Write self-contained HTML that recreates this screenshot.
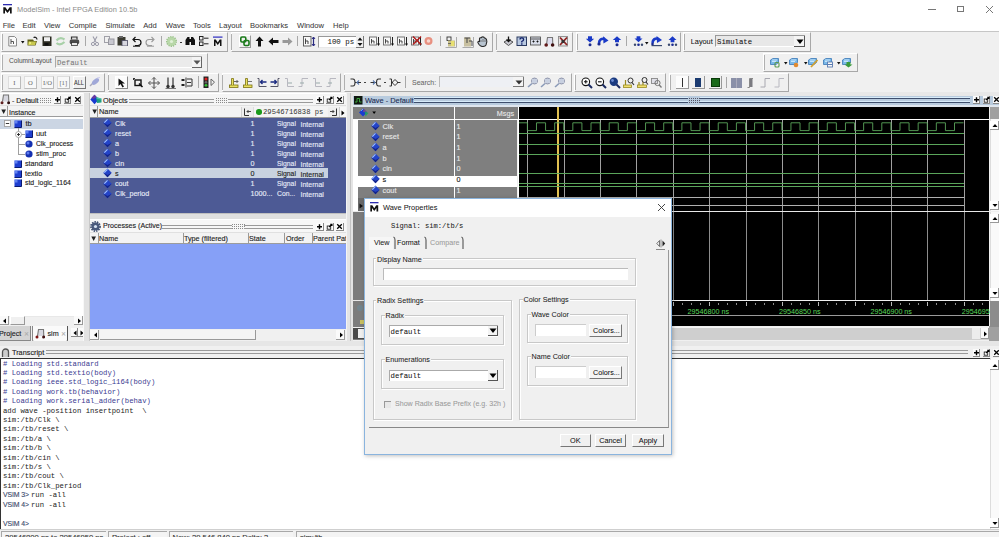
<!DOCTYPE html><html><head><meta charset="utf-8"><style>
*{box-sizing:border-box;}
html,body{margin:0;padding:0;}
body{width:999px;height:537px;overflow:hidden;position:relative;background:#f0f0f0;font-family:"Liberation Sans",sans-serif;font-size:7px;color:#000;}
div,span,svg{position:absolute;}
.t{white-space:nowrap;line-height:1;transform:translateY(-50%);-webkit-text-stroke:0.12px currentColor;}
.m{font-family:"Liberation Mono",monospace;}
span[style*="Mono"]{-webkit-text-stroke:0;}
</style></head><body>
<div style="left:0px;top:0px;width:999px;height:18px;background:#fff"></div>
<svg style="left:3px;top:4px;" width="10" height="10" viewBox="0 0 10 10"><rect x="0" y="0" width="9" height="1.3" fill="#2b2bb0"/><path d="M0.3 9.5V3.3H2.4L4.5 6.3L6.6 3.3H8.7V9.5H7V6L4.5 9L2 6V9.5Z" fill="#111"/></svg>
<span class="t" style="left:17px;top:9.50px;font-size:7.4px;color:#8a8a8a;-webkit-text-stroke:0;">ModelSim - Intel FPGA Edition 10.5b</span>
<div style="left:928px;top:9px;width:8px;height:1px;background:#777"></div>
<div style="left:957px;top:5.5px;width:7px;height:6.5px;border:1px solid #777"></div>
<svg style="left:985px;top:5px;" width="9" height="9" viewBox="0 0 9 9"><path d="M1 1L8 8M8 1L1 8" stroke="#777" stroke-width="1"/></svg>
<div style="left:0px;top:18px;width:999px;height:13.5px;background:#fff"></div>
<span class="t" style="left:2.7px;top:25.70px;font-size:7.6px;color:#3a3a3a;-webkit-text-stroke:0.05px currentColor;">File</span>
<span class="t" style="left:22.5px;top:25.70px;font-size:7.6px;color:#3a3a3a;-webkit-text-stroke:0.05px currentColor;">Edit</span>
<span class="t" style="left:44px;top:25.70px;font-size:7.6px;color:#3a3a3a;-webkit-text-stroke:0.05px currentColor;">View</span>
<span class="t" style="left:68.8px;top:25.70px;font-size:7.6px;color:#3a3a3a;-webkit-text-stroke:0.05px currentColor;">Compile</span>
<span class="t" style="left:105.4px;top:25.70px;font-size:7.6px;color:#3a3a3a;-webkit-text-stroke:0.05px currentColor;">Simulate</span>
<span class="t" style="left:143.2px;top:25.70px;font-size:7.6px;color:#3a3a3a;-webkit-text-stroke:0.05px currentColor;">Add</span>
<span class="t" style="left:165.8px;top:25.70px;font-size:7.6px;color:#3a3a3a;-webkit-text-stroke:0.05px currentColor;">Wave</span>
<span class="t" style="left:193px;top:25.70px;font-size:7.6px;color:#3a3a3a;-webkit-text-stroke:0.05px currentColor;">Tools</span>
<span class="t" style="left:219px;top:25.70px;font-size:7.6px;color:#3a3a3a;-webkit-text-stroke:0.05px currentColor;">Layout</span>
<span class="t" style="left:250px;top:25.70px;font-size:7.6px;color:#3a3a3a;-webkit-text-stroke:0.05px currentColor;">Bookmarks</span>
<span class="t" style="left:297px;top:25.70px;font-size:7.6px;color:#3a3a3a;-webkit-text-stroke:0.05px currentColor;">Window</span>
<span class="t" style="left:333px;top:25.70px;font-size:7.6px;color:#3a3a3a;-webkit-text-stroke:0.05px currentColor;">Help</span>
<div style="left:0px;top:31px;width:999px;height:1.2px;background:#c6c6c6"></div>
<div style="left:1px;top:32px;width:227px;height:19.5px;border-left:1px solid #fff;border-top:1px solid #fff;border-right:1px solid #a8a8a8;border-bottom:1px solid #a8a8a8;"></div>
<div style="left:1.5px;top:34px;width:1px;height:15.5px;background:#b0b0b0"></div>
<div style="left:230.5px;top:32px;width:262.5px;height:19.5px;border-left:1px solid #fff;border-top:1px solid #fff;border-right:1px solid #a8a8a8;border-bottom:1px solid #a8a8a8;"></div>
<div style="left:231.0px;top:34px;width:1px;height:15.5px;background:#b0b0b0"></div>
<div style="left:495.5px;top:32px;width:77.5px;height:19.5px;border-left:1px solid #fff;border-top:1px solid #fff;border-right:1px solid #a8a8a8;border-bottom:1px solid #a8a8a8;"></div>
<div style="left:496.0px;top:34px;width:1px;height:15.5px;background:#b0b0b0"></div>
<div style="left:576px;top:32px;width:104.5px;height:19.5px;border-left:1px solid #fff;border-top:1px solid #fff;border-right:1px solid #a8a8a8;border-bottom:1px solid #a8a8a8;"></div>
<div style="left:576.5px;top:34px;width:1px;height:15.5px;background:#b0b0b0"></div>
<div style="left:683px;top:32px;width:128px;height:19.5px;border-left:1px solid #fff;border-top:1px solid #fff;border-right:1px solid #a8a8a8;border-bottom:1px solid #a8a8a8;"></div>
<div style="left:683.5px;top:34px;width:1px;height:15.5px;background:#b0b0b0"></div>
<div style="left:1px;top:52.5px;width:207px;height:19.5px;border-left:1px solid #fff;border-top:1px solid #fff;border-right:1px solid #a8a8a8;border-bottom:1px solid #a8a8a8;"></div>
<div style="left:1.5px;top:54.5px;width:1px;height:15.5px;background:#b0b0b0"></div>
<div style="left:763px;top:52.5px;width:95px;height:19.5px;border-left:1px solid #fff;border-top:1px solid #fff;border-right:1px solid #a8a8a8;border-bottom:1px solid #a8a8a8;"></div>
<div style="left:763.5px;top:54.5px;width:1px;height:15.5px;background:#b0b0b0"></div>
<div style="left:1px;top:72.5px;width:104px;height:19.5px;border-left:1px solid #fff;border-top:1px solid #fff;border-right:1px solid #a8a8a8;border-bottom:1px solid #a8a8a8;"></div>
<div style="left:1.5px;top:74.5px;width:1px;height:15.5px;background:#b0b0b0"></div>
<div style="left:107.5px;top:72.5px;width:111.5px;height:19.5px;border-left:1px solid #fff;border-top:1px solid #fff;border-right:1px solid #a8a8a8;border-bottom:1px solid #a8a8a8;"></div>
<div style="left:108.0px;top:74.5px;width:1px;height:15.5px;background:#b0b0b0"></div>
<div style="left:221.5px;top:72.5px;width:119.0px;height:19.5px;border-left:1px solid #fff;border-top:1px solid #fff;border-right:1px solid #a8a8a8;border-bottom:1px solid #a8a8a8;"></div>
<div style="left:222.0px;top:74.5px;width:1px;height:15.5px;background:#b0b0b0"></div>
<div style="left:343.5px;top:72.5px;width:228.0px;height:19.5px;border-left:1px solid #fff;border-top:1px solid #fff;border-right:1px solid #a8a8a8;border-bottom:1px solid #a8a8a8;"></div>
<div style="left:344.0px;top:74.5px;width:1px;height:15.5px;background:#b0b0b0"></div>
<div style="left:574px;top:72.5px;width:91.5px;height:19.5px;border-left:1px solid #fff;border-top:1px solid #fff;border-right:1px solid #a8a8a8;border-bottom:1px solid #a8a8a8;"></div>
<div style="left:574.5px;top:74.5px;width:1px;height:15.5px;background:#b0b0b0"></div>
<div style="left:669px;top:72.5px;width:119.5px;height:19.5px;border-left:1px solid #fff;border-top:1px solid #fff;border-right:1px solid #a8a8a8;border-bottom:1px solid #a8a8a8;"></div>
<div style="left:669.5px;top:74.5px;width:1px;height:15.5px;background:#b0b0b0"></div>
<div style="left:0px;top:93px;width:83px;height:12px;background:#f5f5f5"></div>
<div style="left:89.5px;top:93px;width:256px;height:12px;background:#f5f5f5"></div>
<div style="left:89.5px;top:220px;width:256px;height:12px;background:#f7f7f7"></div>
<div style="left:0px;top:92.5px;width:83px;height:1px;background:#fff"></div>
<svg style="left:0px;top:93px;" width="10" height="12" viewBox="0 0 10 12"><path d="M2.5 8.5L3.5 2H8.5L8.8 8.5" stroke="#777" stroke-width="1.1" fill="#d8d8e0"/><circle cx="2" cy="9.8" r="1.5" fill="#602020"/><circle cx="8.6" cy="9.8" r="1.5" fill="#301010"/></svg>
<span class="t" style="left:12px;top:100.00px;font-size:7px;color:#222;">- Default</span>
<svg style="left:40px;top:98px;" width="12" height="6" viewBox="0 0 12 6"><rect x="0" y="0" width="1" height="1" fill="#8a8a8a"/><rect x="0" y="2" width="1" height="1" fill="#8a8a8a"/><rect x="0" y="4" width="1" height="1" fill="#8a8a8a"/><rect x="2" y="0" width="1" height="1" fill="#8a8a8a"/><rect x="2" y="2" width="1" height="1" fill="#8a8a8a"/><rect x="2" y="4" width="1" height="1" fill="#8a8a8a"/><rect x="4" y="0" width="1" height="1" fill="#8a8a8a"/><rect x="4" y="2" width="1" height="1" fill="#8a8a8a"/><rect x="4" y="4" width="1" height="1" fill="#8a8a8a"/><rect x="6" y="0" width="1" height="1" fill="#8a8a8a"/><rect x="6" y="2" width="1" height="1" fill="#8a8a8a"/><rect x="6" y="4" width="1" height="1" fill="#8a8a8a"/><rect x="8" y="0" width="1" height="1" fill="#8a8a8a"/><rect x="8" y="2" width="1" height="1" fill="#8a8a8a"/><rect x="8" y="4" width="1" height="1" fill="#8a8a8a"/><rect x="10" y="0" width="1" height="1" fill="#8a8a8a"/><rect x="10" y="2" width="1" height="1" fill="#8a8a8a"/><rect x="10" y="4" width="1" height="1" fill="#8a8a8a"/></svg>
<div style="left:53.5px;top:96px;width:7.5px;height:8px;background:#fbfbfb;border-right:1px solid #888;border-bottom:1px solid #888;"></div>
<svg style="left:53.5px;top:96px;" width="7" height="7" viewBox="0 0 7 7"><path d="M3.5 1.2V6.2M1 3.7H6" stroke="#000" stroke-width="1.4"/></svg>
<div style="left:63.7px;top:96px;width:7.5px;height:8px;background:#fbfbfb;border-right:1px solid #888;border-bottom:1px solid #888;"></div>
<svg style="left:63.7px;top:96px;" width="7" height="7" viewBox="0 0 7 7"><rect x="1.2" y="3" width="3.5" height="3.2" fill="none" stroke="#222" stroke-width="0.9"/><path d="M3.2 4L6 1.2M4.2 1.2H6V3" stroke="#000" stroke-width="1.1" fill="none"/></svg>
<div style="left:73.9px;top:96px;width:7.5px;height:8px;background:#fbfbfb;border-right:1px solid #888;border-bottom:1px solid #888;"></div>
<svg style="left:73.9px;top:96px;" width="7" height="7" viewBox="0 0 7 7"><path d="M1.2 1.2L5.8 5.8M5.8 1.2L1.2 5.8" stroke="#000" stroke-width="1.3"/></svg>
<div style="left:0px;top:105px;width:83px;height:12px;background:#f3f3f3;border-top:1px solid #e0e0e0;border-bottom:1px solid #9c9c9c;"></div>
<svg style="left:1px;top:108.5px;" width="6" height="6" viewBox="0 0 6 6"><path d="M0.3 0.5H5L2.65 5Z" fill="#222"/></svg>
<div style="left:7.3px;top:106px;width:0.8px;height:10px;background:#9a9a9a"></div>
<span class="t" style="left:9px;top:111.80px;font-size:7px;color:#222;">Instance</span>
<div style="left:0px;top:117px;width:83px;height:198.5px;background:#fff"></div>
<div style="left:0px;top:118.5px;width:83px;height:10px;background:#cbd5e3"></div>
<svg style="left:3.5px;top:120px;" width="7" height="7" viewBox="0 0 7 7"><rect x="0.5" y="0.5" width="6" height="6" fill="#fff" stroke="#a0a0a0" stroke-width="0.9"/><path d="M1.8 3.5H5.2" stroke="#222" stroke-width="0.9"/></svg>
<svg style="left:14px;top:119.5px;" width="8" height="8" viewBox="0 0 8 8"><rect x="0.5" y="0.5" width="7" height="7" fill="#1f3fd0"/><rect x="0.5" y="0.5" width="3" height="3" fill="#7fa0ff" opacity="0.7"/><path d="M7.5 0.5V7.5H0.5" stroke="#0a1a70" stroke-width="1" fill="none"/></svg>
<span class="t" style="left:25.5px;top:123.50px;font-size:7.4px;color:#222;">tb</span>
<div style="left:17.8px;top:128px;width:0.8px;height:26px;background:#a0a0a0"></div>
<div style="left:18px;top:133.6px;width:7px;height:0.8px;background:#a0a0a0"></div>
<div style="left:18px;top:143.6px;width:7px;height:0.8px;background:#a0a0a0"></div>
<div style="left:18px;top:153.6px;width:7px;height:0.8px;background:#a0a0a0"></div>
<svg style="left:14.5px;top:130.5px;" width="7" height="7" viewBox="0 0 7 7"><circle cx="3.5" cy="3.5" r="3" fill="#fff" stroke="#a0a0a0" stroke-width="0.9"/><path d="M2 3.5H5M3.5 2V5" stroke="#222" stroke-width="0.9"/></svg>
<svg style="left:25px;top:129.8px;" width="8" height="8" viewBox="0 0 8 8"><rect x="0.5" y="0.5" width="7" height="7" fill="#1f3fd0"/><rect x="0.5" y="0.5" width="3" height="3" fill="#7fa0ff" opacity="0.7"/><path d="M7.5 0.5V7.5H0.5" stroke="#0a1a70" stroke-width="1" fill="none"/></svg>
<span class="t" style="left:36px;top:134.30px;font-size:7.4px;color:#222;">uut</span>
<svg style="left:25px;top:139.6px;" width="8" height="8" viewBox="0 0 8 8"><circle cx="4" cy="4" r="3.6" fill="#1530b0"/><circle cx="3" cy="3" r="1.5" fill="#6f8fff" opacity="0.8"/></svg>
<span class="t" style="left:36px;top:144.10px;font-size:6.75px;color:#222;">Clk_process</span>
<svg style="left:25px;top:149.7px;" width="8" height="8" viewBox="0 0 8 8"><circle cx="4" cy="4" r="3.6" fill="#1530b0"/><circle cx="3" cy="3" r="1.5" fill="#6f8fff" opacity="0.8"/></svg>
<span class="t" style="left:36px;top:154.10px;font-size:6.9px;color:#222;">stim_proc</span>
<svg style="left:14px;top:159.7px;" width="8" height="8" viewBox="0 0 8 8"><rect x="0.5" y="0.5" width="7" height="7" fill="#1f3fd0"/><rect x="0.5" y="0.5" width="3" height="3" fill="#7fa0ff" opacity="0.7"/><path d="M7.5 0.5V7.5H0.5" stroke="#0a1a70" stroke-width="1" fill="none"/></svg>
<span class="t" style="left:25px;top:164.30px;font-size:7.2px;color:#222;">standard</span>
<svg style="left:14px;top:169.8px;" width="8" height="8" viewBox="0 0 8 8"><rect x="0.5" y="0.5" width="7" height="7" fill="#1f3fd0"/><rect x="0.5" y="0.5" width="3" height="3" fill="#7fa0ff" opacity="0.7"/><path d="M7.5 0.5V7.5H0.5" stroke="#0a1a70" stroke-width="1" fill="none"/></svg>
<span class="t" style="left:25px;top:174.40px;font-size:7.2px;color:#222;">textio</span>
<svg style="left:14px;top:179px;" width="8" height="8" viewBox="0 0 8 8"><rect x="0.5" y="0.5" width="7" height="7" fill="#1f3fd0"/><rect x="0.5" y="0.5" width="3" height="3" fill="#7fa0ff" opacity="0.7"/><path d="M7.5 0.5V7.5H0.5" stroke="#0a1a70" stroke-width="1" fill="none"/></svg>
<span class="t" style="left:25px;top:183.20px;font-size:6.9px;color:#222;">std_logic_1164</span>
<div style="left:0px;top:315.5px;width:83px;height:10px;background:#f0f0f0;border-top:1px solid #e8e8e8"></div>
<div style="left:0px;top:316px;width:8.5px;height:9px;background:#fafafa;border-right:1px solid #999;border-bottom:1px solid #999;"></div>
<svg style="left:2px;top:317.5px;" width="5" height="6" viewBox="0 0 5 6"><path d="M4 0.5V5.5L1 3Z" fill="#000"/></svg>
<div style="left:9.5px;top:316px;width:15px;height:9px;background:#f0f0f0;border-right:1px solid #999;border-bottom:1px solid #999;border-left:1px solid #fff;border-top:1px solid #fff"></div>
<div style="left:74px;top:316px;width:8.5px;height:9px;background:#fafafa;border-right:1px solid #999;border-bottom:1px solid #999;"></div>
<svg style="left:77px;top:317.5px;" width="5" height="6" viewBox="0 0 5 6"><path d="M1 0.5V5.5L4 3Z" fill="#000"/></svg>
<div style="left:0px;top:326px;width:31px;height:14.5px;background:#d4d4d4;border-right:1px solid #888;border-bottom:1px solid #888"></div>
<span class="t" style="left:-1px;top:334.00px;font-size:7.2px;color:#222;">Project</span>
<span class="t" style="left:24px;top:334.00px;font-size:6px;color:#aaa;">✕</span>
<div style="left:32px;top:325.5px;width:36px;height:16px;background:#fafafa;border-left:1px solid #888;border-right:1px solid #555;border-bottom:1.5px solid #444;border-radius:0 0 2px 2px"></div>
<svg style="left:35px;top:328px;" width="10" height="11" viewBox="0 0 10 11"><path d="M2.5 8L3.5 1.5H8.5L8.8 8" stroke="#777" stroke-width="1.1" fill="#d8d8e0"/><circle cx="2" cy="9" r="1.5" fill="#801818"/><circle cx="8.6" cy="9" r="1.5" fill="#401010"/></svg>
<span class="t" style="left:47.5px;top:334.00px;font-size:7.2px;color:#222;">sim</span>
<span class="t" style="left:61px;top:334.00px;font-size:6px;color:#aaa;">✕</span>
<div style="left:71px;top:327.5px;width:6.5px;height:9px;background:#fafafa;border-right:1px solid #888;border-bottom:1px solid #888"></div>
<svg style="left:72.5px;top:329.5px;" width="4" height="6" viewBox="0 0 4 6"><path d="M3.5 0.5V5.5L0.5 3Z" fill="#000"/></svg>
<div style="left:78px;top:327.5px;width:6.5px;height:9px;background:#fafafa;border-right:1px solid #888;border-bottom:1px solid #888"></div>
<svg style="left:79.5px;top:329.5px;" width="4" height="6" viewBox="0 0 4 6"><path d="M0.5 0.5V5.5L3.5 3Z" fill="#000"/></svg>
<div style="left:83px;top:92.5px;width:6.5px;height:249px;background:#e2e2e2;border-left:1px solid #f8f8f8;border-right:1px solid #c8c8c8"></div>
<div style="left:89.5px;top:92.5px;width:256px;height:1px;background:#fff"></div>
<svg style="left:90px;top:93.5px;" width="12" height="11" viewBox="0 0 12 11"><path d="M4.5 0.8L9 5.5L4.5 10.3L0.3 5.5Z" fill="#1a3ad0"/><path d="M4.5 0.8L7 3.3L3 5L1.5 3.8Z" fill="#6a3aa0"/><path d="M6 3L11.5 4.5V8.5L7 9Z" fill="#20a080"/><path d="M6.5 4L11 5" stroke="#60d0c0" stroke-width="0.8"/></svg>
<span class="t" style="left:103px;top:100.50px;font-size:7.3px;color:#222;">Objects</span>
<div style="left:129px;top:98.5px;width:85px;height:1px;background:#9a9a9a"></div>
<div style="left:129px;top:101.5px;width:85px;height:1px;background:#9a9a9a"></div>
<svg style="left:216px;top:98px;" width="12" height="6" viewBox="0 0 12 6"><rect x="0" y="0" width="1" height="1" fill="#8a8a8a"/><rect x="0" y="2" width="1" height="1" fill="#8a8a8a"/><rect x="0" y="4" width="1" height="1" fill="#8a8a8a"/><rect x="2" y="0" width="1" height="1" fill="#8a8a8a"/><rect x="2" y="2" width="1" height="1" fill="#8a8a8a"/><rect x="2" y="4" width="1" height="1" fill="#8a8a8a"/><rect x="4" y="0" width="1" height="1" fill="#8a8a8a"/><rect x="4" y="2" width="1" height="1" fill="#8a8a8a"/><rect x="4" y="4" width="1" height="1" fill="#8a8a8a"/><rect x="6" y="0" width="1" height="1" fill="#8a8a8a"/><rect x="6" y="2" width="1" height="1" fill="#8a8a8a"/><rect x="6" y="4" width="1" height="1" fill="#8a8a8a"/><rect x="8" y="0" width="1" height="1" fill="#8a8a8a"/><rect x="8" y="2" width="1" height="1" fill="#8a8a8a"/><rect x="8" y="4" width="1" height="1" fill="#8a8a8a"/><rect x="10" y="0" width="1" height="1" fill="#8a8a8a"/><rect x="10" y="2" width="1" height="1" fill="#8a8a8a"/><rect x="10" y="4" width="1" height="1" fill="#8a8a8a"/></svg>
<div style="left:228px;top:98.5px;width:84.5px;height:1px;background:#9a9a9a"></div>
<div style="left:228px;top:101.5px;width:84.5px;height:1px;background:#9a9a9a"></div>
<div style="left:316.0px;top:96px;width:7.5px;height:8px;background:#fbfbfb;border-right:1px solid #888;border-bottom:1px solid #888;"></div>
<svg style="left:316.0px;top:96px;" width="7" height="7" viewBox="0 0 7 7"><path d="M3.5 1.2V6.2M1 3.7H6" stroke="#000" stroke-width="1.4"/></svg>
<div style="left:326.2px;top:96px;width:7.5px;height:8px;background:#fbfbfb;border-right:1px solid #888;border-bottom:1px solid #888;"></div>
<svg style="left:326.2px;top:96px;" width="7" height="7" viewBox="0 0 7 7"><rect x="1.2" y="3" width="3.5" height="3.2" fill="none" stroke="#222" stroke-width="0.9"/><path d="M3.2 4L6 1.2M4.2 1.2H6V3" stroke="#000" stroke-width="1.1" fill="none"/></svg>
<div style="left:336.4px;top:96px;width:7.5px;height:8px;background:#fbfbfb;border-right:1px solid #888;border-bottom:1px solid #888;"></div>
<svg style="left:336.4px;top:96px;" width="7" height="7" viewBox="0 0 7 7"><path d="M1.2 1.2L5.8 5.8M5.8 1.2L1.2 5.8" stroke="#000" stroke-width="1.3"/></svg>
<div style="left:89.5px;top:105px;width:256.0px;height:12.5px;background:#f3f3f3;border-top:1px solid #e0e0e0;border-bottom:1px solid #9c9c9c;"></div>
<svg style="left:91.8px;top:108.5px;" width="6" height="6" viewBox="0 0 6 6"><path d="M0.3 0.5H5L2.65 5Z" fill="#222"/></svg>
<div style="left:97.3px;top:106px;width:0.8px;height:10.5px;background:#9a9a9a"></div>
<span class="t" style="left:99px;top:112.00px;font-size:7.4px;color:#222;">Name</span>
<div style="left:241px;top:106.5px;width:104px;height:10.5px;background:#eeeeee;border-left:1px solid #d0d0d0"></div>
<svg style="left:243px;top:107.5px;" width="9" height="9" viewBox="0 0 9 9"><path d="M1.5 0.5V7.5H6" stroke="#333" stroke-width="1" fill="none"/><path d="M8 3.5H4M5.5 2L4 3.5L5.5 5" stroke="#333" stroke-width="0.9" fill="none"/></svg>
<div style="left:252.5px;top:107px;width:75px;height:10px;background:#f4f4f4;border-left:1px solid #ddd"></div>
<div style="left:256px;top:109.2px;width:5.5px;height:5.5px;background:#1a9a1a;border-radius:50%"></div>
<span class="t" style="left:263px;top:113.40px;font-family:Liberation Mono,monospace;font-size:7.2px;color:#333;">29546716838 ps</span>
<svg style="left:329px;top:107.5px;" width="9" height="9" viewBox="0 0 9 9"><path d="M7.5 0.5V7.5H3" stroke="#333" stroke-width="1" fill="none"/><path d="M1 3.5H5M3.5 2L5 3.5L3.5 5" stroke="#333" stroke-width="0.9" fill="none"/></svg>
<div style="left:339px;top:107px;width:6.5px;height:10px;background:#f8f8f8;border-left:1px solid #ccc"></div>
<svg style="left:340.5px;top:109.5px;" width="4" height="6" viewBox="0 0 4 6"><path d="M0.5 0.5V5.5L3.5 3Z" fill="#000"/></svg>
<div style="left:89.5px;top:117.5px;width:256px;height:95.5px;background:#4d5a95"></div>
<svg style="left:103px;top:118.2px;" width="9" height="10" viewBox="0 0 9 10"><path d="M4.5 0.5L8.7 4.8L4.5 9.3L0.3 4.8Z" fill="#2444c8"/><path d="M8.7 4.8L4.5 9.3L0.3 4.8L4.5 7Z" fill="#14248a"/><path d="M1.3 4.6L4.5 1.4" stroke="#a0c0ff" stroke-width="1.1"/></svg>
<span class="t" style="left:115px;top:123.70px;font-size:7.2px;color:#e8ecf8;">Clk</span>
<span class="t" style="left:250.5px;top:123.70px;font-size:7.2px;color:#e8ecf8;">1</span>
<span class="t" style="left:277px;top:123.70px;font-size:6.8px;color:#e8ecf8;">Signal</span>
<span class="t" style="left:300.5px;top:123.70px;font-size:7px;color:#e8ecf8;">Internal</span>
<svg style="left:103px;top:128.25px;" width="9" height="10" viewBox="0 0 9 10"><path d="M4.5 0.5L8.7 4.8L4.5 9.3L0.3 4.8Z" fill="#2444c8"/><path d="M8.7 4.8L4.5 9.3L0.3 4.8L4.5 7Z" fill="#14248a"/><path d="M1.3 4.6L4.5 1.4" stroke="#a0c0ff" stroke-width="1.1"/></svg>
<span class="t" style="left:115px;top:133.75px;font-size:7.2px;color:#e8ecf8;">reset</span>
<span class="t" style="left:250.5px;top:133.75px;font-size:7.2px;color:#e8ecf8;">1</span>
<span class="t" style="left:277px;top:133.75px;font-size:6.8px;color:#e8ecf8;">Signal</span>
<span class="t" style="left:300.5px;top:133.75px;font-size:7px;color:#e8ecf8;">Internal</span>
<svg style="left:103px;top:138.3px;" width="9" height="10" viewBox="0 0 9 10"><path d="M4.5 0.5L8.7 4.8L4.5 9.3L0.3 4.8Z" fill="#2444c8"/><path d="M8.7 4.8L4.5 9.3L0.3 4.8L4.5 7Z" fill="#14248a"/><path d="M1.3 4.6L4.5 1.4" stroke="#a0c0ff" stroke-width="1.1"/></svg>
<span class="t" style="left:115px;top:143.80px;font-size:7.2px;color:#e8ecf8;">a</span>
<span class="t" style="left:250.5px;top:143.80px;font-size:7.2px;color:#e8ecf8;">1</span>
<span class="t" style="left:277px;top:143.80px;font-size:6.8px;color:#e8ecf8;">Signal</span>
<span class="t" style="left:300.5px;top:143.80px;font-size:7px;color:#e8ecf8;">Internal</span>
<svg style="left:103px;top:148.35px;" width="9" height="10" viewBox="0 0 9 10"><path d="M4.5 0.5L8.7 4.8L4.5 9.3L0.3 4.8Z" fill="#2444c8"/><path d="M8.7 4.8L4.5 9.3L0.3 4.8L4.5 7Z" fill="#14248a"/><path d="M1.3 4.6L4.5 1.4" stroke="#a0c0ff" stroke-width="1.1"/></svg>
<span class="t" style="left:115px;top:153.85px;font-size:7.2px;color:#e8ecf8;">b</span>
<span class="t" style="left:250.5px;top:153.85px;font-size:7.2px;color:#e8ecf8;">1</span>
<span class="t" style="left:277px;top:153.85px;font-size:6.8px;color:#e8ecf8;">Signal</span>
<span class="t" style="left:300.5px;top:153.85px;font-size:7px;color:#e8ecf8;">Internal</span>
<svg style="left:103px;top:158.4px;" width="9" height="10" viewBox="0 0 9 10"><path d="M4.5 0.5L8.7 4.8L4.5 9.3L0.3 4.8Z" fill="#2444c8"/><path d="M8.7 4.8L4.5 9.3L0.3 4.8L4.5 7Z" fill="#14248a"/><path d="M1.3 4.6L4.5 1.4" stroke="#a0c0ff" stroke-width="1.1"/></svg>
<span class="t" style="left:115px;top:163.90px;font-size:7.2px;color:#e8ecf8;">cin</span>
<span class="t" style="left:250.5px;top:163.90px;font-size:7.2px;color:#e8ecf8;">0</span>
<span class="t" style="left:277px;top:163.90px;font-size:6.8px;color:#e8ecf8;">Signal</span>
<span class="t" style="left:300.5px;top:163.90px;font-size:7px;color:#e8ecf8;">Internal</span>
<div style="left:89.5px;top:168.45px;width:238.5px;height:10px;background:#c8d2e0"></div>
<svg style="left:103px;top:168.45px;" width="9" height="10" viewBox="0 0 9 10"><path d="M4.5 0.5L8.7 4.8L4.5 9.3L0.3 4.8Z" fill="#2444c8"/><path d="M8.7 4.8L4.5 9.3L0.3 4.8L4.5 7Z" fill="#14248a"/><path d="M1.3 4.6L4.5 1.4" stroke="#a0c0ff" stroke-width="1.1"/></svg>
<span class="t" style="left:115px;top:173.95px;font-size:7.2px;color:#222;">s</span>
<span class="t" style="left:250.5px;top:173.95px;font-size:7.2px;color:#222;">0</span>
<span class="t" style="left:277px;top:173.95px;font-size:6.8px;color:#222;">Signal</span>
<span class="t" style="left:300.5px;top:173.95px;font-size:7px;color:#222;">Internal</span>
<svg style="left:103px;top:178.5px;" width="9" height="10" viewBox="0 0 9 10"><path d="M4.5 0.5L8.7 4.8L4.5 9.3L0.3 4.8Z" fill="#2444c8"/><path d="M8.7 4.8L4.5 9.3L0.3 4.8L4.5 7Z" fill="#14248a"/><path d="M1.3 4.6L4.5 1.4" stroke="#a0c0ff" stroke-width="1.1"/></svg>
<span class="t" style="left:115px;top:184.00px;font-size:7.2px;color:#e8ecf8;">cout</span>
<span class="t" style="left:250.5px;top:184.00px;font-size:7.2px;color:#e8ecf8;">1</span>
<span class="t" style="left:277px;top:184.00px;font-size:6.8px;color:#e8ecf8;">Signal</span>
<span class="t" style="left:300.5px;top:184.00px;font-size:7px;color:#e8ecf8;">Internal</span>
<svg style="left:103px;top:188.55px;" width="9" height="10" viewBox="0 0 9 10"><path d="M4.5 0.5L8.7 4.8L4.5 9.3L0.3 4.8Z" fill="#2444c8"/><path d="M8.7 4.8L4.5 9.3L0.3 4.8L4.5 7Z" fill="#14248a"/><path d="M1.3 4.6L4.5 1.4" stroke="#a0c0ff" stroke-width="1.1"/></svg>
<span class="t" style="left:115px;top:194.05px;font-size:7.2px;color:#e8ecf8;">Clk_period</span>
<span class="t" style="left:250.5px;top:194.05px;font-size:7.2px;color:#e8ecf8;">1000...</span>
<span class="t" style="left:277px;top:194.05px;font-size:6.8px;color:#e8ecf8;">Con...</span>
<span class="t" style="left:300.5px;top:194.05px;font-size:7px;color:#e8ecf8;">Internal</span>
<div style="left:89.5px;top:213px;width:256px;height:7px;background:#e0e0e0;border-top:1px solid #c0c0c0;border-bottom:1px solid #fff"></div>
<svg style="left:90px;top:221px;" width="11" height="11" viewBox="0 0 11 11"><circle cx="5.5" cy="5.5" r="4" fill="#4a5a7c"/><circle cx="5.5" cy="5.5" r="4.6" fill="none" stroke="#3e4e70" stroke-width="1.6" stroke-dasharray="1.5 1"/><circle cx="5.5" cy="5.5" r="1.6" fill="#d8e4f4"/></svg>
<span class="t" style="left:103px;top:226.70px;font-size:7.1px;color:#222;">Processes (Active)</span>
<div style="left:162px;top:224.5px;width:70px;height:1px;background:#9a9a9a"></div>
<div style="left:162px;top:227.5px;width:70px;height:1px;background:#9a9a9a"></div>
<svg style="left:232px;top:224px;" width="13" height="6" viewBox="0 0 13 6"><rect x="0" y="0" width="1" height="1" fill="#8a8a8a"/><rect x="0" y="2" width="1" height="1" fill="#8a8a8a"/><rect x="0" y="4" width="1" height="1" fill="#8a8a8a"/><rect x="2" y="0" width="1" height="1" fill="#8a8a8a"/><rect x="2" y="2" width="1" height="1" fill="#8a8a8a"/><rect x="2" y="4" width="1" height="1" fill="#8a8a8a"/><rect x="4" y="0" width="1" height="1" fill="#8a8a8a"/><rect x="4" y="2" width="1" height="1" fill="#8a8a8a"/><rect x="4" y="4" width="1" height="1" fill="#8a8a8a"/><rect x="6" y="0" width="1" height="1" fill="#8a8a8a"/><rect x="6" y="2" width="1" height="1" fill="#8a8a8a"/><rect x="6" y="4" width="1" height="1" fill="#8a8a8a"/><rect x="8" y="0" width="1" height="1" fill="#8a8a8a"/><rect x="8" y="2" width="1" height="1" fill="#8a8a8a"/><rect x="8" y="4" width="1" height="1" fill="#8a8a8a"/><rect x="10" y="0" width="1" height="1" fill="#8a8a8a"/><rect x="10" y="2" width="1" height="1" fill="#8a8a8a"/><rect x="10" y="4" width="1" height="1" fill="#8a8a8a"/><rect x="12" y="0" width="1" height="1" fill="#8a8a8a"/><rect x="12" y="2" width="1" height="1" fill="#8a8a8a"/><rect x="12" y="4" width="1" height="1" fill="#8a8a8a"/></svg>
<div style="left:244px;top:224.5px;width:68.5px;height:1px;background:#9a9a9a"></div>
<div style="left:244px;top:227.5px;width:68.5px;height:1px;background:#9a9a9a"></div>
<div style="left:316.0px;top:222.5px;width:7.5px;height:8px;background:#fbfbfb;border-right:1px solid #888;border-bottom:1px solid #888;"></div>
<svg style="left:316.0px;top:222.5px;" width="7" height="7" viewBox="0 0 7 7"><path d="M3.5 1.2V6.2M1 3.7H6" stroke="#000" stroke-width="1.4"/></svg>
<div style="left:326.2px;top:222.5px;width:7.5px;height:8px;background:#fbfbfb;border-right:1px solid #888;border-bottom:1px solid #888;"></div>
<svg style="left:326.2px;top:222.5px;" width="7" height="7" viewBox="0 0 7 7"><rect x="1.2" y="3" width="3.5" height="3.2" fill="none" stroke="#222" stroke-width="0.9"/><path d="M3.2 4L6 1.2M4.2 1.2H6V3" stroke="#000" stroke-width="1.1" fill="none"/></svg>
<div style="left:336.4px;top:222.5px;width:7.5px;height:8px;background:#fbfbfb;border-right:1px solid #888;border-bottom:1px solid #888;"></div>
<svg style="left:336.4px;top:222.5px;" width="7" height="7" viewBox="0 0 7 7"><path d="M1.2 1.2L5.8 5.8M5.8 1.2L1.2 5.8" stroke="#000" stroke-width="1.3"/></svg>
<div style="left:89.5px;top:232px;width:256.0px;height:11.5px;background:#f3f3f3;border-top:1px solid #e0e0e0;border-bottom:1px solid #9c9c9c;"></div>
<svg style="left:91px;top:235.5px;" width="6" height="6" viewBox="0 0 6 6"><path d="M0.3 0.5H5L2.65 5Z" fill="#222"/></svg>
<div style="left:97.8px;top:233px;width:0.8px;height:10px;background:#9a9a9a"></div>
<div style="left:182.5px;top:233px;width:0.8px;height:10px;background:#9a9a9a"></div>
<div style="left:248px;top:233px;width:0.8px;height:10px;background:#9a9a9a"></div>
<div style="left:284.4px;top:233px;width:0.8px;height:10px;background:#9a9a9a"></div>
<div style="left:312.4px;top:233px;width:0.8px;height:10px;background:#9a9a9a"></div>
<span class="t" style="left:99px;top:238.80px;font-size:7.2px;color:#222;">Name</span>
<span class="t" style="left:184px;top:238.80px;font-size:7.2px;color:#222;">Type (filtered)</span>
<span class="t" style="left:249px;top:238.80px;font-size:7.2px;color:#222;">State</span>
<span class="t" style="left:286px;top:238.80px;font-size:7.2px;color:#222;">Order</span>
<span class="t" style="left:313px;top:238.80px;font-size:7.2px;color:#222;">Parent Pat</span>
<div style="left:89.5px;top:243.5px;width:256px;height:85px;background:#86a0f7"></div>
<div style="left:89.5px;top:328.5px;width:256px;height:12px;background:#f0f0f0"></div>
<div style="left:90px;top:329.5px;width:9px;height:10px;background:#fafafa;border-right:1px solid #999;border-bottom:1px solid #999;"></div>
<svg style="left:92.5px;top:331.5px;" width="5" height="6" viewBox="0 0 5 6"><path d="M4 0.5V5.5L1 3Z" fill="#000"/></svg>
<div style="left:100px;top:329.5px;width:156px;height:10px;background:#f4f4f4;border-right:1px solid #999;border-bottom:1px solid #999;"></div>
<div style="left:336px;top:329.5px;width:9px;height:10px;background:#fafafa;border-right:1px solid #999;border-bottom:1px solid #999;"></div>
<svg style="left:339px;top:331.5px;" width="5" height="6" viewBox="0 0 5 6"><path d="M1 0.5V5.5L4 3Z" fill="#000"/></svg>
<div style="left:345.5px;top:92.5px;width:7.5px;height:249px;background:#e4e4e4;border-left:1px solid #f4f4f4"></div>
<div style="left:349.5px;top:92.5px;width:1px;height:249px;background:#c4c4c4"></div>
<div style="left:353px;top:92px;width:646px;height:3.5px;background:#e8e8e8"></div>
<div style="left:353px;top:95.5px;width:646px;height:9.5px;background:#b8cbde"></div>
<svg style="left:354px;top:96px;" width="9" height="9" viewBox="0 0 9 9"><rect x="0" y="0" width="8.5" height="8.5" fill="#101810"/><path d="M1 6H3V2.5H5.5V6H7.5" stroke="#3aa03a" stroke-width="1" fill="none"/></svg>
<span class="t" style="left:365px;top:100.70px;font-size:7.4px;color:#1f2f55;">Wave - Default</span>
<div style="left:414px;top:96.5px;width:556px;height:1px;background:#d8ecfa"></div>
<div style="left:414px;top:97.5px;width:556px;height:1.7px;background:#3e4e6c"></div>
<div style="left:414px;top:100.5px;width:556px;height:1px;background:#d8ecfa"></div>
<div style="left:414px;top:101.5px;width:556px;height:1.7px;background:#3e4e6c"></div>
<div style="left:688px;top:96.5px;width:12px;height:7px;background:#b8cbde"></div>
<svg style="left:689px;top:97.5px;" width="11" height="6" viewBox="0 0 11 6"><rect x="0" y="0" width="1" height="1" fill="#556"/><rect x="0" y="2" width="1" height="1" fill="#556"/><rect x="0" y="4" width="1" height="1" fill="#556"/><rect x="2" y="0" width="1" height="1" fill="#556"/><rect x="2" y="2" width="1" height="1" fill="#556"/><rect x="2" y="4" width="1" height="1" fill="#556"/><rect x="4" y="0" width="1" height="1" fill="#556"/><rect x="4" y="2" width="1" height="1" fill="#556"/><rect x="4" y="4" width="1" height="1" fill="#556"/><rect x="6" y="0" width="1" height="1" fill="#556"/><rect x="6" y="2" width="1" height="1" fill="#556"/><rect x="6" y="4" width="1" height="1" fill="#556"/><rect x="8" y="0" width="1" height="1" fill="#556"/><rect x="8" y="2" width="1" height="1" fill="#556"/><rect x="8" y="4" width="1" height="1" fill="#556"/><rect x="10" y="0" width="1" height="1" fill="#556"/><rect x="10" y="2" width="1" height="1" fill="#556"/><rect x="10" y="4" width="1" height="1" fill="#556"/></svg>
<div style="left:972.5px;top:96px;width:7.5px;height:8px;background:#fbfbfb;border-right:1px solid #888;border-bottom:1px solid #888;"></div>
<svg style="left:972.5px;top:96px;" width="7" height="7" viewBox="0 0 7 7"><path d="M3.5 1.2V6.2M1 3.7H6" stroke="#000" stroke-width="1.4"/></svg>
<div style="left:982.7px;top:96px;width:7.5px;height:8px;background:#fbfbfb;border-right:1px solid #888;border-bottom:1px solid #888;"></div>
<svg style="left:982.7px;top:96px;" width="7" height="7" viewBox="0 0 7 7"><rect x="1.2" y="3" width="3.5" height="3.2" fill="none" stroke="#222" stroke-width="0.9"/><path d="M3.2 4L6 1.2M4.2 1.2H6V3" stroke="#000" stroke-width="1.1" fill="none"/></svg>
<div style="left:992.9px;top:96px;width:7.5px;height:8px;background:#fbfbfb;border-right:1px solid #888;border-bottom:1px solid #888;"></div>
<svg style="left:992.9px;top:96px;" width="7" height="7" viewBox="0 0 7 7"><path d="M1.2 1.2L5.8 5.8M5.8 1.2L1.2 5.8" stroke="#000" stroke-width="1.3"/></svg>
<div style="left:353px;top:105px;width:646px;height:2px;background:#dfe6ee"></div>
<div style="left:353px;top:107px;width:165px;height:12px;background:#7f7f7f"></div>
<svg style="left:358px;top:108px;" width="12" height="10" viewBox="0 0 12 10"><path d="M5 0.5L9 4.5L5 8.5L1 4.5Z" fill="#1a3ad0"/><path d="M5.5 0.5L9 4H5Z" fill="#7040a0"/><path d="M6.5 3L10.5 5L7.5 8.5Z" fill="#20a060" opacity="0.9"/><path d="M3 3L5 1" stroke="#6af" stroke-width="1"/></svg>
<svg style="left:372px;top:111px;" width="5" height="4" viewBox="0 0 5 4"><path d="M0.3 0.5H4L2.15 3Z" fill="#000"/></svg>
<div style="left:454px;top:107px;width:1.2px;height:90px;background:#fff"></div>
<span class="t" style="left:514px;top:113.50px;font-size:7.2px;color:#e8e8e8;transform:translate(-100%,-50%);">Msgs</span>
<div style="left:517.5px;top:107px;width:1.2px;height:90px;background:#fff"></div>
<div style="left:519px;top:107px;width:470px;height:12px;background:#000"></div>
<div style="left:353px;top:118.7px;width:636px;height:1.3px;background:#fff"></div>
<div style="left:353px;top:120px;width:5.3px;height:91px;background:#fff"></div>
<div style="left:358.3px;top:120px;width:95.7px;height:77.5px;background:#7f7f7f"></div>
<div style="left:455.2px;top:120px;width:62.3px;height:77.5px;background:#7f7f7f"></div>
<svg style="left:371px;top:121.1px;" width="9" height="10" viewBox="0 0 9 10"><path d="M4.5 0.5L8.7 4.8L4.5 9.3L0.3 4.8Z" fill="#2444c8"/><path d="M8.7 4.8L4.5 9.3L0.3 4.8L4.5 7Z" fill="#14248a"/><path d="M1.3 4.6L4.5 1.4" stroke="#a0c0ff" stroke-width="1.1"/></svg>
<span class="t" style="left:382.5px;top:126.60px;font-size:7.4px;color:#e8e8e8;">Clk</span>
<span class="t" style="left:456.5px;top:126.60px;font-size:7.2px;color:#e8e8e8;">1</span>
<svg style="left:371px;top:131.76999999999998px;" width="9" height="10" viewBox="0 0 9 10"><path d="M4.5 0.5L8.7 4.8L4.5 9.3L0.3 4.8Z" fill="#2444c8"/><path d="M8.7 4.8L4.5 9.3L0.3 4.8L4.5 7Z" fill="#14248a"/><path d="M1.3 4.6L4.5 1.4" stroke="#a0c0ff" stroke-width="1.1"/></svg>
<span class="t" style="left:382.5px;top:137.27px;font-size:7.4px;color:#e8e8e8;">reset</span>
<span class="t" style="left:456.5px;top:137.27px;font-size:7.2px;color:#e8e8e8;">1</span>
<svg style="left:371px;top:142.44px;" width="9" height="10" viewBox="0 0 9 10"><path d="M4.5 0.5L8.7 4.8L4.5 9.3L0.3 4.8Z" fill="#2444c8"/><path d="M8.7 4.8L4.5 9.3L0.3 4.8L4.5 7Z" fill="#14248a"/><path d="M1.3 4.6L4.5 1.4" stroke="#a0c0ff" stroke-width="1.1"/></svg>
<span class="t" style="left:382.5px;top:147.94px;font-size:7.4px;color:#e8e8e8;">a</span>
<span class="t" style="left:456.5px;top:147.94px;font-size:7.2px;color:#e8e8e8;">1</span>
<svg style="left:371px;top:153.10999999999999px;" width="9" height="10" viewBox="0 0 9 10"><path d="M4.5 0.5L8.7 4.8L4.5 9.3L0.3 4.8Z" fill="#2444c8"/><path d="M8.7 4.8L4.5 9.3L0.3 4.8L4.5 7Z" fill="#14248a"/><path d="M1.3 4.6L4.5 1.4" stroke="#a0c0ff" stroke-width="1.1"/></svg>
<span class="t" style="left:382.5px;top:158.61px;font-size:7.4px;color:#e8e8e8;">b</span>
<span class="t" style="left:456.5px;top:158.61px;font-size:7.2px;color:#e8e8e8;">1</span>
<svg style="left:371px;top:163.78px;" width="9" height="10" viewBox="0 0 9 10"><path d="M4.5 0.5L8.7 4.8L4.5 9.3L0.3 4.8Z" fill="#2444c8"/><path d="M8.7 4.8L4.5 9.3L0.3 4.8L4.5 7Z" fill="#14248a"/><path d="M1.3 4.6L4.5 1.4" stroke="#a0c0ff" stroke-width="1.1"/></svg>
<span class="t" style="left:382.5px;top:169.28px;font-size:7.4px;color:#e8e8e8;">cin</span>
<span class="t" style="left:456.5px;top:169.28px;font-size:7.2px;color:#e8e8e8;">0</span>
<div style="left:358.3px;top:176.15px;width:95.7px;height:10.5px;background:#fff"></div>
<div style="left:455.2px;top:176.15px;width:62.3px;height:10.5px;background:#fff"></div>
<svg style="left:371px;top:174.45px;" width="9" height="10" viewBox="0 0 9 10"><path d="M4.5 0.5L8.7 4.8L4.5 9.3L0.3 4.8Z" fill="#2444c8"/><path d="M8.7 4.8L4.5 9.3L0.3 4.8L4.5 7Z" fill="#14248a"/><path d="M1.3 4.6L4.5 1.4" stroke="#a0c0ff" stroke-width="1.1"/></svg>
<span class="t" style="left:382.5px;top:179.95px;font-size:7.4px;color:#111;">s</span>
<span class="t" style="left:456.5px;top:179.95px;font-size:7.2px;color:#111;">0</span>
<svg style="left:371px;top:185.11999999999998px;" width="9" height="10" viewBox="0 0 9 10"><path d="M4.5 0.5L8.7 4.8L4.5 9.3L0.3 4.8Z" fill="#2444c8"/><path d="M8.7 4.8L4.5 9.3L0.3 4.8L4.5 7Z" fill="#14248a"/><path d="M1.3 4.6L4.5 1.4" stroke="#a0c0ff" stroke-width="1.1"/></svg>
<span class="t" style="left:382.5px;top:190.62px;font-size:7.4px;color:#e8e8e8;">cout</span>
<span class="t" style="left:456.5px;top:190.62px;font-size:7.2px;color:#e8e8e8;">1</span>
<div style="left:358.3px;top:197.5px;width:95.7px;height:13.5px;background:#6a6a6a"></div>
<svg style="left:359px;top:203px;" width="5" height="6" viewBox="0 0 5 6"><path d="M0.5 0.5V5.5L4 3Z" fill="#111"/></svg>
<div style="left:519px;top:120px;width:470px;height:206px;background:#000"></div>
<div style="left:527.4px;top:120px;width:0.9px;height:91px;background:#a0a0a0"></div>
<div style="left:527.4px;top:212px;width:0.8px;height:88px;background:#8c8c8c"></div>
<div style="left:563.75px;top:120px;width:0.9px;height:91px;background:#a0a0a0"></div>
<div style="left:563.75px;top:212px;width:0.8px;height:88px;background:#8c8c8c"></div>
<div style="left:600.1px;top:120px;width:0.9px;height:91px;background:#a0a0a0"></div>
<div style="left:600.1px;top:212px;width:0.8px;height:88px;background:#8c8c8c"></div>
<div style="left:636.45px;top:120px;width:0.9px;height:91px;background:#a0a0a0"></div>
<div style="left:636.45px;top:212px;width:0.8px;height:88px;background:#8c8c8c"></div>
<div style="left:672.8px;top:120px;width:0.9px;height:91px;background:#a0a0a0"></div>
<div style="left:672.8px;top:212px;width:0.8px;height:88px;background:#8c8c8c"></div>
<div style="left:709.15px;top:120px;width:0.9px;height:91px;background:#a0a0a0"></div>
<div style="left:709.15px;top:212px;width:0.8px;height:88px;background:#8c8c8c"></div>
<div style="left:745.5px;top:120px;width:0.9px;height:91px;background:#a0a0a0"></div>
<div style="left:745.5px;top:212px;width:0.8px;height:88px;background:#8c8c8c"></div>
<div style="left:781.85px;top:120px;width:0.9px;height:91px;background:#a0a0a0"></div>
<div style="left:781.85px;top:212px;width:0.8px;height:88px;background:#8c8c8c"></div>
<div style="left:818.2px;top:120px;width:0.9px;height:91px;background:#a0a0a0"></div>
<div style="left:818.2px;top:212px;width:0.8px;height:88px;background:#8c8c8c"></div>
<div style="left:854.55px;top:120px;width:0.9px;height:91px;background:#a0a0a0"></div>
<div style="left:854.55px;top:212px;width:0.8px;height:88px;background:#8c8c8c"></div>
<div style="left:890.9px;top:120px;width:0.9px;height:91px;background:#a0a0a0"></div>
<div style="left:890.9px;top:212px;width:0.8px;height:88px;background:#8c8c8c"></div>
<div style="left:927.25px;top:120px;width:0.9px;height:91px;background:#a0a0a0"></div>
<div style="left:927.25px;top:212px;width:0.8px;height:88px;background:#8c8c8c"></div>
<div style="left:963.6px;top:120px;width:0.9px;height:91px;background:#a0a0a0"></div>
<div style="left:963.6px;top:212px;width:0.8px;height:88px;background:#8c8c8c"></div>
<div style="left:557.2px;top:107px;width:1.4px;height:104px;background:#e0c050"></div>
<svg style="left:0;top:0" width="999" height="537"><path d="M519 122.8H527.4V130.6H536.49V122.8H545.57V130.6H554.66V122.8H563.75V130.6H572.84V122.8H581.92V130.6H591.01V122.8H600.10V130.6H609.19V122.8H618.27V130.6H627.36V122.8H636.45V130.6H645.54V122.8H654.62V130.6H663.71V122.8H672.80V130.6H681.89V122.8H690.97V130.6H700.06V122.8H709.15V130.6H718.24V122.8H727.32V130.6H736.41V122.8H745.50V130.6H754.59V122.8H763.67V130.6H772.76V122.8H781.85V130.6H790.94V122.8H800.02V130.6H809.11V122.8H818.20V130.6H827.29V122.8H836.37V130.6H845.46V122.8H854.55V130.6H863.64V122.8H872.72V130.6H881.81V122.8H890.90V130.6H899.99V122.8H909.07V130.6H918.16V122.8H927.25V130.6H936.34V122.8H945.42V130.6H954.51V122.8H963.50" stroke="#5aa55a" stroke-width="0.9" fill="none"/></svg>
<div style="left:519px;top:133.1px;width:444.5px;height:1px;background:#5aa55a"></div>
<div style="left:519px;top:143.7px;width:444.5px;height:1px;background:#5aa55a"></div>
<div style="left:519px;top:154.3px;width:444.5px;height:1px;background:#5aa55a"></div>
<div style="left:519px;top:172.8px;width:444.5px;height:1px;background:#5aa55a"></div>
<div style="left:519px;top:183.4px;width:444.5px;height:1px;background:#5aa55a"></div>
<div style="left:519px;top:186.2px;width:444.5px;height:1px;background:#5aa55a"></div>
<div style="left:519px;top:197.3px;width:444.5px;height:1px;background:#b0b0b0"></div>
<div style="left:519px;top:204.9px;width:444.5px;height:1px;background:#b0b0b0"></div>
<div style="left:353px;top:210.5px;width:636px;height:1.5px;background:#e8e8e8"></div>
<div style="left:353px;top:212px;width:10.5px;height:128px;background:#7c7c7c"></div>
<div style="left:353px;top:299.6px;width:10.5px;height:1.2px;background:#e8e8e8"></div>
<div style="left:357px;top:305px;width:6px;height:6px;background:#6a8a9a;border-radius:50%;opacity:0.6"></div>
<div style="left:360px;top:320px;width:3.5px;height:4px;background:#c8c060"></div>
<div style="left:353px;top:326.6px;width:10.5px;height:1.2px;background:#f0f0f0"></div>
<div style="left:353px;top:328px;width:10.5px;height:11px;background:#4a4a4a"></div>
<div style="left:358px;top:329px;width:5.5px;height:9px;background:#f0f0f0"></div>
<div style="left:363.5px;top:212px;width:155.5px;height:115px;background:#000"></div>
<div style="left:519px;top:299.7px;width:470px;height:1.2px;background:#f0f0f0"></div>
<div style="left:527.4px;top:301.5px;width:0.9px;height:4px;background:#b8b8b8"></div>
<div style="left:536.4875px;top:303px;width:0.9px;height:1.8px;background:#8a8a8a"></div>
<div style="left:545.5749999999999px;top:303px;width:0.9px;height:1.8px;background:#8a8a8a"></div>
<div style="left:554.6625px;top:303px;width:0.9px;height:1.8px;background:#8a8a8a"></div>
<div style="left:563.75px;top:301.5px;width:0.9px;height:4px;background:#b8b8b8"></div>
<div style="left:572.8375px;top:303px;width:0.9px;height:1.8px;background:#8a8a8a"></div>
<div style="left:581.925px;top:303px;width:0.9px;height:1.8px;background:#8a8a8a"></div>
<div style="left:591.0124999999999px;top:303px;width:0.9px;height:1.8px;background:#8a8a8a"></div>
<div style="left:600.1px;top:301.5px;width:0.9px;height:4px;background:#b8b8b8"></div>
<div style="left:609.1875px;top:303px;width:0.9px;height:1.8px;background:#8a8a8a"></div>
<div style="left:618.275px;top:303px;width:0.9px;height:1.8px;background:#8a8a8a"></div>
<div style="left:627.3625px;top:303px;width:0.9px;height:1.8px;background:#8a8a8a"></div>
<div style="left:636.45px;top:301.5px;width:0.9px;height:4px;background:#b8b8b8"></div>
<div style="left:645.5375px;top:303px;width:0.9px;height:1.8px;background:#8a8a8a"></div>
<div style="left:654.625px;top:303px;width:0.9px;height:1.8px;background:#8a8a8a"></div>
<div style="left:663.7125px;top:303px;width:0.9px;height:1.8px;background:#8a8a8a"></div>
<div style="left:672.8px;top:301.5px;width:0.9px;height:4px;background:#b8b8b8"></div>
<div style="left:681.8875px;top:303px;width:0.9px;height:1.8px;background:#8a8a8a"></div>
<div style="left:690.975px;top:303px;width:0.9px;height:1.8px;background:#8a8a8a"></div>
<div style="left:700.0625px;top:303px;width:0.9px;height:1.8px;background:#8a8a8a"></div>
<div style="left:709.15px;top:301.5px;width:0.9px;height:4px;background:#b8b8b8"></div>
<div style="left:718.2375px;top:303px;width:0.9px;height:1.8px;background:#8a8a8a"></div>
<div style="left:727.325px;top:303px;width:0.9px;height:1.8px;background:#8a8a8a"></div>
<div style="left:736.4125px;top:303px;width:0.9px;height:1.8px;background:#8a8a8a"></div>
<div style="left:745.5px;top:301.5px;width:0.9px;height:4px;background:#b8b8b8"></div>
<div style="left:754.5875px;top:303px;width:0.9px;height:1.8px;background:#8a8a8a"></div>
<div style="left:763.675px;top:303px;width:0.9px;height:1.8px;background:#8a8a8a"></div>
<div style="left:772.7625px;top:303px;width:0.9px;height:1.8px;background:#8a8a8a"></div>
<div style="left:781.85px;top:301.5px;width:0.9px;height:4px;background:#b8b8b8"></div>
<div style="left:790.9375px;top:303px;width:0.9px;height:1.8px;background:#8a8a8a"></div>
<div style="left:800.025px;top:303px;width:0.9px;height:1.8px;background:#8a8a8a"></div>
<div style="left:809.1125px;top:303px;width:0.9px;height:1.8px;background:#8a8a8a"></div>
<div style="left:818.2px;top:301.5px;width:0.9px;height:4px;background:#b8b8b8"></div>
<div style="left:827.2874999999999px;top:303px;width:0.9px;height:1.8px;background:#8a8a8a"></div>
<div style="left:836.375px;top:303px;width:0.9px;height:1.8px;background:#8a8a8a"></div>
<div style="left:845.4625px;top:303px;width:0.9px;height:1.8px;background:#8a8a8a"></div>
<div style="left:854.55px;top:301.5px;width:0.9px;height:4px;background:#b8b8b8"></div>
<div style="left:863.6375px;top:303px;width:0.9px;height:1.8px;background:#8a8a8a"></div>
<div style="left:872.7249999999999px;top:303px;width:0.9px;height:1.8px;background:#8a8a8a"></div>
<div style="left:881.8125px;top:303px;width:0.9px;height:1.8px;background:#8a8a8a"></div>
<div style="left:890.9px;top:301.5px;width:0.9px;height:4px;background:#b8b8b8"></div>
<div style="left:899.9875px;top:303px;width:0.9px;height:1.8px;background:#8a8a8a"></div>
<div style="left:909.075px;top:303px;width:0.9px;height:1.8px;background:#8a8a8a"></div>
<div style="left:918.1624999999999px;top:303px;width:0.9px;height:1.8px;background:#8a8a8a"></div>
<div style="left:927.25px;top:301.5px;width:0.9px;height:4px;background:#b8b8b8"></div>
<div style="left:936.3375px;top:303px;width:0.9px;height:1.8px;background:#8a8a8a"></div>
<div style="left:945.425px;top:303px;width:0.9px;height:1.8px;background:#8a8a8a"></div>
<div style="left:954.5125px;top:303px;width:0.9px;height:1.8px;background:#8a8a8a"></div>
<div style="left:963.6px;top:301.5px;width:0.9px;height:4px;background:#b8b8b8"></div>
<div style="left:972.6875px;top:303px;width:0.9px;height:1.8px;background:#8a8a8a"></div>
<div style="left:981.775px;top:303px;width:0.9px;height:1.8px;background:#8a8a8a"></div>
<div style="left:519px;top:314.8px;width:470px;height:0.8px;background:#9a9a9a"></div>
<span class="t" style="left:708.4px;top:311.80px;font-size:7.2px;color:#5ad85a;transform:translate(-50%,-50%);-webkit-text-stroke:0;">29546800 ns</span>
<span class="t" style="left:799.8px;top:311.80px;font-size:7.2px;color:#5ad85a;transform:translate(-50%,-50%);-webkit-text-stroke:0;">29546850 ns</span>
<span class="t" style="left:891.2px;top:311.80px;font-size:7.2px;color:#5ad85a;transform:translate(-50%,-50%);-webkit-text-stroke:0;">29546900 ns</span>
<span class="t" style="left:982.6px;top:311.80px;font-size:7.2px;color:#5ad85a;transform:translate(-50%,-50%);-webkit-text-stroke:0;">29546950 ns</span>
<div style="left:519px;top:327px;width:470px;height:13px;background:#cfcfcf;border-top:1px solid #f4f4f4"></div>
<div style="left:972px;top:328px;width:8px;height:11px;background:#ececec"></div>
<div style="left:980.5px;top:328px;width:8px;height:11px;background:#fafafa;border-right:1px solid #999;border-bottom:1px solid #999;"></div>
<svg style="left:983px;top:330.5px;" width="5" height="6" viewBox="0 0 5 6"><path d="M1 0.5V5.5L4 3Z" fill="#000"/></svg>
<div style="left:989px;top:326px;width:10px;height:15px;background:#a0a0a0"></div>
<div style="left:989.5px;top:107px;width:9.5px;height:12px;background:#a0a0a0"></div>
<div style="left:989.5px;top:119px;width:9.5px;height:92px;background:#fafafa;border-left:1px solid #ddd"></div>
<div style="left:990px;top:120.5px;width:9px;height:9.5px;background:#fff;border-right:1px solid #999;border-bottom:1px solid #999"></div>
<svg style="left:992px;top:123px;" width="6" height="5" viewBox="0 0 6 5"><path d="M0.5 4L3 1L5.5 4Z" fill="#000"/></svg>
<div style="left:990px;top:200.5px;width:9px;height:9.5px;background:#fff;border-right:1px solid #999;border-bottom:1px solid #999"></div>
<svg style="left:992px;top:203px;" width="6" height="5" viewBox="0 0 6 5"><path d="M0.5 1L3 4L5.5 1Z" fill="#000"/></svg>
<div style="left:989.5px;top:212px;width:9.5px;height:89px;background:#fafafa;border-left:1px solid #ddd"></div>
<div style="left:990px;top:213.5px;width:9px;height:9.5px;background:#fff;border-right:1px solid #999;border-bottom:1px solid #999"></div>
<svg style="left:992px;top:216px;" width="6" height="5" viewBox="0 0 6 5"><path d="M0.5 4L3 1L5.5 4Z" fill="#000"/></svg>
<div style="left:990px;top:288px;width:9px;height:9.5px;background:#fff;border-right:1px solid #999;border-bottom:1px solid #999"></div>
<svg style="left:992px;top:290.5px;" width="6" height="5" viewBox="0 0 6 5"><path d="M0.5 1L3 4L5.5 1Z" fill="#000"/></svg>
<div style="left:989.5px;top:301px;width:9.5px;height:26px;background:#8c8c8c"></div>
<div style="left:0px;top:341px;width:999px;height:4.5px;background:#e6e6e6"></div>
<div style="left:0px;top:345.5px;width:999px;height:12.5px;background:#f0f0f0"></div>
<svg style="left:1px;top:348px;" width="9" height="10" viewBox="0 0 9 10"><path d="M1.5 9V4A3 3 0 0 1 7.5 4V9" stroke="#555" stroke-width="1.3" fill="#ccc"/></svg>
<span class="t" style="left:12px;top:353.00px;font-size:7.3px;color:#222;">Transcript</span>
<div style="left:46px;top:350px;width:922px;height:1px;background:#9a9a9a"></div>
<div style="left:46px;top:353px;width:922px;height:1px;background:#9a9a9a"></div>
<div style="left:972.5px;top:349px;width:7.5px;height:8px;background:#fbfbfb;border-right:1px solid #888;border-bottom:1px solid #888;"></div>
<svg style="left:972.5px;top:349px;" width="7" height="7" viewBox="0 0 7 7"><path d="M3.5 1.2V6.2M1 3.7H6" stroke="#000" stroke-width="1.4"/></svg>
<div style="left:982.7px;top:349px;width:7.5px;height:8px;background:#fbfbfb;border-right:1px solid #888;border-bottom:1px solid #888;"></div>
<svg style="left:982.7px;top:349px;" width="7" height="7" viewBox="0 0 7 7"><rect x="1.2" y="3" width="3.5" height="3.2" fill="none" stroke="#222" stroke-width="0.9"/><path d="M3.2 4L6 1.2M4.2 1.2H6V3" stroke="#000" stroke-width="1.1" fill="none"/></svg>
<div style="left:992.9px;top:349px;width:7.5px;height:8px;background:#fbfbfb;border-right:1px solid #888;border-bottom:1px solid #888;"></div>
<svg style="left:992.9px;top:349px;" width="7" height="7" viewBox="0 0 7 7"><path d="M1.2 1.2L5.8 5.8M5.8 1.2L1.2 5.8" stroke="#000" stroke-width="1.3"/></svg>
<div style="left:0px;top:358px;width:989.5px;height:170.5px;background:#fff;border-top:1.2px solid #333;border-left:1.5px solid #333"></div>
<div style="left:989.5px;top:358px;width:9.5px;height:170.5px;background:#fafafa;border-left:1px solid #ddd"></div>
<div style="left:990px;top:360px;width:9px;height:9.5px;background:#fff;border-right:1px solid #999;border-bottom:1px solid #999"></div>
<svg style="left:992px;top:362.5px;" width="6" height="5" viewBox="0 0 6 5"><path d="M0.5 4L3 1L5.5 4Z" fill="#000"/></svg>
<div style="left:990px;top:518px;width:9px;height:9.5px;background:#fff;border-right:1px solid #999;border-bottom:1px solid #999"></div>
<svg style="left:992px;top:520.5px;" width="6" height="5" viewBox="0 0 6 5"><path d="M0.5 1L3 4L5.5 1Z" fill="#000"/></svg>
<span class="t" style="left:3px;top:364.60px;font-family:Liberation Mono,monospace;font-size:7.25px;color:#3a3a90;">#&nbsp;Loading&nbsp;std.standard</span>
<span class="t" style="left:3px;top:374.00px;font-family:Liberation Mono,monospace;font-size:7.25px;color:#3a3a90;">#&nbsp;Loading&nbsp;std.textio(body)</span>
<span class="t" style="left:3px;top:383.40px;font-family:Liberation Mono,monospace;font-size:7.25px;color:#3a3a90;">#&nbsp;Loading&nbsp;ieee.std_logic_1164(body)</span>
<span class="t" style="left:3px;top:392.80px;font-family:Liberation Mono,monospace;font-size:7.25px;color:#3a3a90;">#&nbsp;Loading&nbsp;work.tb(behavior)</span>
<span class="t" style="left:3px;top:402.20px;font-family:Liberation Mono,monospace;font-size:7.25px;color:#3a3a90;">#&nbsp;Loading&nbsp;work.serial_adder(behav)</span>
<span class="t" style="left:3px;top:411.60px;font-family:Liberation Mono,monospace;font-size:7.25px;color:#222;">add&nbsp;wave&nbsp;-position&nbsp;insertpoint&nbsp;&nbsp;\</span>
<span class="t" style="left:3px;top:421.00px;font-family:Liberation Mono,monospace;font-size:7.25px;color:#222;">sim:/tb/Clk&nbsp;\</span>
<span class="t" style="left:3px;top:430.40px;font-family:Liberation Mono,monospace;font-size:7.25px;color:#222;">sim:/tb/reset&nbsp;\</span>
<span class="t" style="left:3px;top:439.80px;font-family:Liberation Mono,monospace;font-size:7.25px;color:#222;">sim:/tb/a&nbsp;\</span>
<span class="t" style="left:3px;top:449.20px;font-family:Liberation Mono,monospace;font-size:7.25px;color:#222;">sim:/tb/b&nbsp;\</span>
<span class="t" style="left:3px;top:458.60px;font-family:Liberation Mono,monospace;font-size:7.25px;color:#222;">sim:/tb/cin&nbsp;\</span>
<span class="t" style="left:3px;top:468.00px;font-family:Liberation Mono,monospace;font-size:7.25px;color:#222;">sim:/tb/s&nbsp;\</span>
<span class="t" style="left:3px;top:477.40px;font-family:Liberation Mono,monospace;font-size:7.25px;color:#222;">sim:/tb/cout&nbsp;\</span>
<span class="t" style="left:3px;top:486.80px;font-family:Liberation Mono,monospace;font-size:7.25px;color:#222;">sim:/tb/Clk_period</span>
<span class="t" style="left:3px;top:495.30px;font-size:6.9px;color:#3a4a6a;letter-spacing:-0.1px;">VSIM 3></span>
<span class="t" style="left:31px;top:496.20px;font-family:Liberation Mono,monospace;font-size:7.25px;color:#222;">run&nbsp;-all</span>
<span class="t" style="left:3px;top:504.70px;font-size:6.9px;color:#3a4a6a;letter-spacing:-0.1px;">VSIM 4></span>
<span class="t" style="left:31px;top:505.60px;font-family:Liberation Mono,monospace;font-size:7.25px;color:#222;">run&nbsp;-all</span>
<span class="t" style="left:3px;top:523.50px;font-size:6.9px;color:#3a4a6a;letter-spacing:-0.1px;">VSIM 4></span>
<div style="left:0px;top:528.5px;width:999px;height:8.5px;background:#f0f0f0;border-top:1px solid #cfcfcf"></div>
<div style="left:1px;top:530.5px;width:105px;height:8px;border-left:1px solid #a8a8a8;border-top:1px solid #a8a8a8;background:#f4f4f4"></div>
<span class="t" style="left:5px;top:537.50px;font-size:7.6px;color:#333;">29546800 ns to 29546950 ns</span>
<div style="left:108px;top:530.5px;width:59px;height:8px;border-left:1px solid #a8a8a8;border-top:1px solid #a8a8a8;background:#f4f4f4"></div>
<span class="t" style="left:112px;top:537.50px;font-size:7.6px;color:#333;">Project : off</span>
<div style="left:168.5px;top:530.5px;width:124.5px;height:8px;border-left:1px solid #a8a8a8;border-top:1px solid #a8a8a8;background:#f4f4f4"></div>
<span class="t" style="left:172.5px;top:537.50px;font-size:7.6px;color:#333;">Now: 29,546,840 ps  Delta: 3</span>
<div style="left:296px;top:530.5px;width:703px;height:8px;border-left:1px solid #a8a8a8;border-top:1px solid #a8a8a8;background:#f4f4f4"></div>
<span class="t" style="left:300px;top:537.50px;font-size:7.6px;color:#333;">sim:/tb</span>
<div style="left:363.5px;top:197.5px;width:308px;height:257.5px;background:#f0f0f0;border:1px solid #8ab4de;box-shadow:1px 1px 4px rgba(0,0,0,0.25)"></div>
<div style="left:364.5px;top:198.5px;width:306px;height:18.5px;background:#fff"></div>
<svg style="left:369.5px;top:202px;" width="9" height="10" viewBox="0 0 9 10"><rect x="0" y="0" width="8.5" height="1.3" fill="#2b2bb0"/><path d="M0.3 9.5V3.3H2.3L4.25 6.3L6.2 3.3H8.2V9.5H6.5V6L4.25 9L2 6V9.5Z" fill="#111"/></svg>
<span class="t" style="left:383px;top:208.10px;font-size:7.4px;color:#222;-webkit-text-stroke:0.05px currentColor;">Wave Properties</span>
<svg style="left:656.5px;top:202.5px;" width="9" height="9" viewBox="0 0 9 9"><path d="M1 1L8 8M8 1L1 8" stroke="#333" stroke-width="0.9"/></svg>
<span class="t" style="left:391px;top:227.40px;font-family:Liberation Mono,monospace;font-size:7.1px;color:#222;-webkit-text-stroke:0.05px currentColor;">Signal:&nbsp;sim:/tb/s</span>
<div style="left:369px;top:236.5px;width:24px;height:13px;background:#f6f6f6"></div>
<span class="t" style="left:374px;top:243.00px;font-size:7.2px;color:#222;-webkit-text-stroke:0.05px currentColor;">View</span>
<svg style="left:392.5px;top:235.5px;" width="3" height="14" viewBox="0 0 3 14"><path d="M0.5 1Q2 1.5 2 4V13" stroke="#555" stroke-width="1.1" fill="none"/></svg>
<svg style="left:423.5px;top:235.5px;" width="3" height="14" viewBox="0 0 3 14"><path d="M0.5 1Q2 1.5 2 4V13" stroke="#555" stroke-width="1.1" fill="none"/></svg>
<svg style="left:460.5px;top:235.5px;" width="3" height="14" viewBox="0 0 3 14"><path d="M0.5 1Q2 1.5 2 4V13" stroke="#555" stroke-width="1.1" fill="none"/></svg>
<span class="t" style="left:397px;top:243.00px;font-size:7.2px;color:#111;-webkit-text-stroke:0.05px currentColor;">Format</span>
<span class="t" style="left:430px;top:243.00px;font-size:7.2px;color:#999;-webkit-text-stroke:0.05px currentColor;">Compare</span>
<svg style="left:656px;top:239px;" width="10" height="9" viewBox="0 0 10 9"><path d="M3.5 1.5L0.8 4.5L3.5 7.5Z" fill="none" stroke="#555" stroke-width="0.8"/><path d="M5 0.5V8.5" stroke="#777" stroke-width="0.8"/><path d="M6.5 1.5L9.2 4.5L6.5 7.5Z" fill="#222"/></svg>
<div style="left:656px;top:248.5px;width:9px;height:0.8px;background:#888"></div>
<div style="left:368.5px;top:249.5px;width:300px;height:178px;border-right:1.5px solid #999;border-bottom:1.5px solid #888;"></div>
<div style="left:372.5px;top:258.4px;width:263.5px;height:27.600000000000023px;border:1px solid #c8c8c8;box-shadow:inset 1px 1px 0 #fff, 1px 1px 0 #fff"></div>
<span class="t" style="left:376.0px;top:259.50px;font-size:7.2px;color:#222;background:#f0f0f0;padding:0 1px;-webkit-text-stroke:0.05px currentColor;">Display Name</span>
<div style="left:382.5px;top:268px;width:245px;height:12px;background:#fff;border-top:1px solid #bbb;border-left:1px solid #bbb"></div>
<div style="left:372.5px;top:300px;width:139.89999999999998px;height:120px;border:1px solid #c8c8c8;box-shadow:inset 1px 1px 0 #fff, 1px 1px 0 #fff"></div>
<span class="t" style="left:376.0px;top:301.10px;font-size:7.2px;color:#222;background:#f0f0f0;padding:0 1px;-webkit-text-stroke:0.05px currentColor;">Radix Settings</span>
<div style="left:381px;top:314.5px;width:123px;height:30.19999999999999px;border:1px solid #c8c8c8;box-shadow:inset 1px 1px 0 #fff, 1px 1px 0 #fff"></div>
<span class="t" style="left:384.5px;top:315.60px;font-size:7.2px;color:#222;background:#f0f0f0;padding:0 1px;-webkit-text-stroke:0.05px currentColor;">Radix</span>
<div style="left:381px;top:358.9px;width:123px;height:30.100000000000023px;border:1px solid #c8c8c8;box-shadow:inset 1px 1px 0 #fff, 1px 1px 0 #fff"></div>
<span class="t" style="left:384.5px;top:360.00px;font-size:7.2px;color:#222;background:#f0f0f0;padding:0 1px;-webkit-text-stroke:0.05px currentColor;">Enumerations</span>
<div style="left:389px;top:325.4px;width:109px;height:11.5px;background:#fff;border-top:1px solid #aaa;border-left:1px solid #aaa"></div>
<span class="t" style="left:390.5px;top:332.80px;font-family:Liberation Mono,monospace;font-size:7.3px;color:#111;-webkit-text-stroke:0.05px currentColor;">default</span>
<div style="left:487.5px;top:325.9px;width:10px;height:10.5px;background:#f4f4f4;border-right:1px solid #555;border-bottom:1px solid #555"></div>
<svg style="left:488.5px;top:328.4px;" width="8" height="6" viewBox="0 0 8 6"><path d="M0.5 0.5H7.5L4 5Z" fill="#000"/></svg>
<div style="left:389px;top:369.5px;width:109px;height:11.5px;background:#fff;border-top:1px solid #aaa;border-left:1px solid #aaa"></div>
<span class="t" style="left:390.5px;top:376.90px;font-family:Liberation Mono,monospace;font-size:7.3px;color:#111;-webkit-text-stroke:0.05px currentColor;">default</span>
<div style="left:487.5px;top:370.0px;width:10px;height:10.5px;background:#f4f4f4;border-right:1px solid #555;border-bottom:1px solid #555"></div>
<svg style="left:488.5px;top:372.5px;" width="8" height="6" viewBox="0 0 8 6"><path d="M0.5 0.5H7.5L4 5Z" fill="#000"/></svg>
<div style="left:384px;top:401px;width:7px;height:7px;border-left:1px solid #999;border-top:1px solid #999;background:#e8e8e8"></div>
<span class="t" style="left:395px;top:405.40px;font-size:7.1px;color:#999;-webkit-text-stroke:0.05px currentColor;">Show Radix Base Prefix (e.g. 32h )</span>
<div style="left:519px;top:299.3px;width:116.70000000000005px;height:120.89999999999998px;border:1px solid #c8c8c8;box-shadow:inset 1px 1px 0 #fff, 1px 1px 0 #fff"></div>
<span class="t" style="left:522.5px;top:300.40px;font-size:7.2px;color:#222;background:#f0f0f0;padding:0 1px;-webkit-text-stroke:0.05px currentColor;">Color Settings</span>
<div style="left:527px;top:314.2px;width:100.5px;height:29.19999999999999px;border:1px solid #c8c8c8;box-shadow:inset 1px 1px 0 #fff, 1px 1px 0 #fff"></div>
<span class="t" style="left:530.5px;top:315.30px;font-size:7.2px;color:#222;background:#f0f0f0;padding:0 1px;-webkit-text-stroke:0.05px currentColor;">Wave Color</span>
<div style="left:527px;top:356px;width:100.5px;height:29.5px;border:1px solid #c8c8c8;box-shadow:inset 1px 1px 0 #fff, 1px 1px 0 #fff"></div>
<span class="t" style="left:530.5px;top:357.10px;font-size:7.2px;color:#222;background:#f0f0f0;padding:0 1px;-webkit-text-stroke:0.05px currentColor;">Name Color</span>
<div style="left:535px;top:324px;width:51px;height:12px;background:#fff;border-top:1px solid #ccc;border-left:1px solid #ccc"></div>
<div style="left:589px;top:323.5px;width:32.5px;height:13.5px;background:#f4f4f4;border-right:1px solid #777;border-bottom:1px solid #777;border-left:1px solid #fff;border-top:1px solid #fff"></div>
<span class="t" style="left:593px;top:330.80px;font-size:7.2px;color:#111;-webkit-text-stroke:0.05px currentColor;">Colors...</span>
<div style="left:535px;top:366px;width:51px;height:12px;background:#fff;border-top:1px solid #ccc;border-left:1px solid #ccc"></div>
<div style="left:589px;top:365.5px;width:32.5px;height:13.5px;background:#f4f4f4;border-right:1px solid #777;border-bottom:1px solid #777;border-left:1px solid #fff;border-top:1px solid #fff"></div>
<span class="t" style="left:593px;top:372.80px;font-size:7.2px;color:#111;-webkit-text-stroke:0.05px currentColor;">Colors...</span>
<div style="left:560px;top:434px;width:30.5px;height:13px;background:#f0f0f0;border-right:1px solid #777;border-bottom:1px solid #777;border-left:1px solid #fff;border-top:1px solid #fff"></div>
<span class="t" style="left:575.25px;top:441.10px;font-size:7.3px;color:#111;transform:translate(-50%,-50%);-webkit-text-stroke:0.05px currentColor;">OK</span>
<div style="left:595px;top:434px;width:31px;height:13px;background:#f0f0f0;border-right:1px solid #777;border-bottom:1px solid #777;border-left:1px solid #fff;border-top:1px solid #fff"></div>
<span class="t" style="left:610.5px;top:441.10px;font-size:7.3px;color:#111;transform:translate(-50%,-50%);-webkit-text-stroke:0.05px currentColor;">Cancel</span>
<div style="left:632px;top:434px;width:32px;height:13px;background:#f0f0f0;border-right:1px solid #777;border-bottom:1px solid #777;border-left:1px solid #fff;border-top:1px solid #fff"></div>
<span class="t" style="left:648.0px;top:441.10px;font-size:7.3px;color:#111;transform:translate(-50%,-50%);-webkit-text-stroke:0.05px currentColor;">Apply</span>
<svg style="left:8px;top:36px;" width="10" height="11" viewBox="0 0 10 11"><path d="M0.8 0.5H6.5L8.5 2.5V10H0.8Z" fill="#fafafa" stroke="#8a8a8a" stroke-width="1"/><path d="M3 3V8M3 5.5H5.5V8" stroke="#555" stroke-width="1" fill="none"/></svg>
<svg style="left:21px;top:41px;" width="4" height="3" viewBox="0 0 4 3"><path d="M0 0H3.5L1.75 2.5Z" fill="#111"/></svg>
<svg style="left:27px;top:36px;" width="11" height="10" viewBox="0 0 11 10"><path d="M0.5 3.5H6L7 5H10L8.5 9.5H0.5Z" fill="#60601a"/><path d="M1.5 5.5H9L8 9H1.2Z" fill="#c8c850"/><path d="M2 6L4 7L2 8" stroke="#ffff90" stroke-width="0.8" fill="none"/><path d="M6.5 1.5Q9.5 0.5 10 3.5" stroke="#222" stroke-width="1.3" fill="none"/></svg>
<svg style="left:42px;top:36px;" width="10" height="11" viewBox="0 0 10 11"><rect x="0.5" y="0.5" width="9" height="9.5" fill="#2a2a20"/><rect x="2" y="1.2" width="6" height="4" fill="#f0f0f0"/><rect x="2.5" y="7" width="4" height="2.5" fill="#111"/></svg>
<svg style="left:55px;top:36px;" width="11" height="10" viewBox="0 0 11 10"><path d="M1.5 4.5Q5 0.5 9.5 3.5" stroke="#a8d0a8" stroke-width="2.2" fill="none"/><path d="M9.5 6Q5 10 1.5 7" stroke="#a8d0a8" stroke-width="2.2" fill="none"/></svg>
<svg style="left:69px;top:35.5px;" width="11" height="10" viewBox="0 0 11 10"><path d="M2.5 3.5V1H8V3.5" stroke="#333" stroke-width="1.2" fill="#ddd"/><rect x="0.7" y="3.5" width="9.5" height="4.5" rx="1.5" fill="#4a4a4a"/><rect x="2.5" y="6.5" width="6" height="3" fill="#e8e8e8" stroke="#333" stroke-width="0.8"/></svg>
<div style="left:84.5px;top:36px;width:1px;height:10px;background:#a8a8a8"></div>
<svg style="left:91px;top:36px;" width="8" height="10" viewBox="0 0 8 10"><path d="M2 0.5L5 6M6 0.5L3 6" stroke="#9a9aa8" stroke-width="1.1"/><circle cx="2" cy="8" r="1.6" fill="none" stroke="#9a9aa8" stroke-width="1"/><circle cx="6" cy="8" r="1.6" fill="none" stroke="#9a9aa8" stroke-width="1"/></svg>
<svg style="left:104px;top:36px;" width="11" height="9" viewBox="0 0 11 9"><rect x="0.5" y="0.5" width="5" height="6" fill="#f0f0f0" stroke="#a0a0a8"/><rect x="4.5" y="3" width="5.5" height="5.5" fill="#c8c8d0" stroke="#9898a0"/></svg>
<svg style="left:117px;top:36px;" width="11" height="10" viewBox="0 0 11 10"><rect x="0.5" y="1" width="8" height="8.5" fill="#3a3a30"/><rect x="2" y="0" width="4" height="2" fill="#666"/><rect x="5" y="4.5" width="5.5" height="5.5" fill="#d8d8e0" stroke="#4a4a60" stroke-width="0.8"/></svg>
<svg style="left:132px;top:36px;" width="10" height="11" viewBox="0 0 10 11"><path d="M2 3.5H6A3 3 0 0 1 6 9.5H3" stroke="#111" stroke-width="1.2" fill="none"/><path d="M3.5 1L1 3.5L3.5 6" stroke="#111" stroke-width="1.2" fill="none"/><path d="M1 10.2H8" stroke="#111" stroke-width="1"/></svg>
<svg style="left:145px;top:36px;" width="10" height="11" viewBox="0 0 10 11"><path d="M8 3.5H4A3 3 0 0 0 4 9.5H7" stroke="#999" stroke-width="1.1" fill="none"/><path d="M6.5 1L9 3.5L6.5 6" stroke="#999" stroke-width="1.1" fill="none"/><path d="M2 10.2H9" stroke="#999" stroke-width="1"/></svg>
<div style="left:160.5px;top:36px;width:1px;height:10px;background:#a8a8a8"></div>
<svg style="left:166px;top:36px;" width="11" height="11" viewBox="0 0 11 11"><circle cx="5.5" cy="5.5" r="4.5" fill="#b8d8a8"/><circle cx="5.5" cy="5.5" r="4.8" fill="none" stroke="#98c088" stroke-width="1.4" stroke-dasharray="1.3 1"/><circle cx="5.5" cy="5.5" r="1.6" fill="#e0f0d8"/></svg>
<div style="left:179.5px;top:41.5px;width:2px;height:1px;background:#333"></div>
<svg style="left:185px;top:36px;" width="11" height="10" viewBox="0 0 11 10"><path d="M0.5 9V4L2.5 1H4.5V9ZM6 9V1H8L10 4V9Z" fill="#111"/><rect x="4" y="3" width="2.5" height="3" fill="#111"/></svg>
<svg style="left:199px;top:36px;" width="10" height="10" viewBox="0 0 10 10"><rect x="0.5" y="0.5" width="3.5" height="3.5" fill="none" stroke="#222"/><rect x="0.5" y="6" width="3.5" height="3.5" fill="none" stroke="#222"/><path d="M5 2.2H9.5M5 7.8H9.5" stroke="#222" stroke-width="1"/></svg>
<svg style="left:213px;top:35.5px;" width="10" height="11" viewBox="0 0 10 11"><rect x="0" y="0.5" width="9.5" height="1.2" fill="#2b2bc0"/><path d="M1 10V3.5H2.8L4.75 6.5L6.7 3.5H8.5V10H7V6L4.75 9L2.5 6V10Z" fill="#111"/></svg>
<div style="left:238.5px;top:35px;width:12.5px;height:13px;border-right:1px solid #999;border-bottom:1px solid #999;border-left:1px solid #fff;border-top:1px solid #fff"></div>
<svg style="left:240px;top:36px;" width="10" height="11" viewBox="0 0 10 11"><rect x="0.8" y="1" width="5" height="5" rx="1.2" fill="none" stroke="#1a7a1a" stroke-width="1.6"/><rect x="4" y="4.5" width="5" height="5" rx="1.2" fill="none" stroke="#1a7a1a" stroke-width="1.6"/></svg>
<svg style="left:255px;top:36px;" width="9" height="11" viewBox="0 0 9 11"><path d="M4.5 0.5L8.5 5H6V10.5H3V5H0.5Z" fill="#111"/></svg>
<svg style="left:268px;top:37px;" width="11" height="9" viewBox="0 0 11 9"><path d="M0.5 4.5L5 0.5V3H10.5V6H5V8.5Z" fill="#111"/></svg>
<svg style="left:282px;top:37px;" width="11" height="9" viewBox="0 0 11 9"><path d="M10.5 4.5L6 0.5V3H0.5V6H6V8.5Z" fill="#999"/></svg>
<div style="left:297px;top:36px;width:1px;height:10px;background:#a8a8a8"></div>
<svg style="left:303px;top:36px;" width="13" height="11" viewBox="0 0 13 11"><rect x="0.5" y="0.5" width="7.5" height="9.5" fill="#f8f8f8" stroke="#555" stroke-width="0.9"/><path d="M2.5 2.5V8M2.5 5H5V8" stroke="#333" stroke-width="0.9" fill="none"/><path d="M10.5 1V10" stroke="#2a2a80" stroke-width="1.2"/><path d="M9 3L10.5 1L12 3M9 8L10.5 10L12 8" stroke="#2a2a80" stroke-width="1" fill="none"/></svg>
<div style="left:317.5px;top:36px;width:38px;height:11.5px;background:#fff;border-left:1px solid #999;border-top:1px solid #999;border-bottom:1px solid #e8e8e8"></div>
<span class="t" style="left:327.5px;top:43.40px;font-family:Liberation Mono,monospace;font-size:7.4px;color:#222;-webkit-text-stroke:0.05px currentColor;">100&nbsp;ps</span>
<div style="left:356px;top:36px;width:7.5px;height:12px;background:#f0f0f0;border-right:1px solid #777;border-bottom:1px solid #777"></div>
<svg style="left:357px;top:37px;" width="6" height="10" viewBox="0 0 6 10"><path d="M0.5 3.5L3 0.5L5.5 3.5ZM0.5 6L3 9L5.5 6Z" fill="#111"/></svg>
<svg style="left:369px;top:36px;" width="12" height="11" viewBox="0 0 12 11"><rect x="0.5" y="1" width="7" height="8" fill="#f8f8f8" stroke="#666" stroke-width="0.9"/><path d="M2.5 3V7.5M2.5 5H5V7.5" stroke="#333" stroke-width="0.9" fill="none"/><path d="M9.5 1V9" stroke="#222" stroke-width="1"/><path d="M8 7.5L9.5 10L11 7.5Z" fill="#111"/></svg>
<svg style="left:383px;top:36px;" width="12" height="11" viewBox="0 0 12 11"><rect x="0.5" y="1" width="7" height="8" fill="#f8f8f8" stroke="#666" stroke-width="0.9"/><path d="M2.5 3V7.5M2.5 5H5V7.5" stroke="#333" stroke-width="0.9" fill="none"/><path d="M9.5 1V9" stroke="#222" stroke-width="1"/><path d="M8 7.5L9.5 10L11 7.5Z" fill="#111"/></svg>
<svg style="left:397px;top:36px;" width="12" height="11" viewBox="0 0 12 11"><rect x="0.5" y="1" width="7" height="8" fill="#f8f8f8" stroke="#666" stroke-width="0.9"/><path d="M2.5 3V7.5M2.5 5H5V7.5" stroke="#333" stroke-width="0.9" fill="none"/><path d="M9.5 1V9" stroke="#222" stroke-width="1"/><path d="M8 7.5L9.5 10L11 7.5Z" fill="#111"/></svg>
<svg style="left:411px;top:36px;" width="12" height="11" viewBox="0 0 12 11"><rect x="0.5" y="1" width="7" height="8" fill="#f8f8f8" stroke="#666" stroke-width="0.9"/><path d="M2.5 3V7.5M2.5 5H5V7.5" stroke="#333" stroke-width="0.9" fill="none"/><path d="M9.5 1V9" stroke="#222" stroke-width="1"/><path d="M8 7.5L9.5 10L11 7.5Z" fill="#111"/><path d="M2 0.5L10 8.5M10 0.5L2 8.5" stroke="#b01818" stroke-width="1.4"/></svg>
<svg style="left:424px;top:36px;" width="9" height="10" viewBox="0 0 9 10"><circle cx="4.5" cy="5" r="4" fill="#e89080"/><circle cx="4.5" cy="5" r="1.8" fill="#f8d8d0"/></svg>
<div style="left:439.5px;top:36px;width:1px;height:10px;background:#a8a8a8"></div>
<svg style="left:445px;top:35.5px;" width="13" height="12" viewBox="0 0 13 12"><path d="M11.5 1V11.5H0.5" stroke="#aaa" stroke-width="1" fill="none"/><rect x="2" y="1" width="4" height="3.5" fill="#f0f0f0" stroke="#333" stroke-width="0.9"/><rect x="3" y="4.5" width="7" height="6" fill="#c8c088"/><rect x="6" y="5" width="3" height="5" fill="#e8e070"/><path d="M3 7.5H6" stroke="#555" stroke-width="0.8"/></svg>
<svg style="left:462px;top:35.5px;" width="13" height="12" viewBox="0 0 13 12"><path d="M11.5 1V11.5H0.5" stroke="#aaa" stroke-width="1" fill="none"/><rect x="2" y="1.5" width="7" height="9" fill="#c8c0a0"/><path d="M2.5 2H8M5 2V7M7 5H10V10" stroke="#444" stroke-width="1" fill="none"/></svg>
<svg style="left:477px;top:35.5px;" width="11" height="11" viewBox="0 0 11 11"><path d="M2.5 5.5V3Q2.5 1.5 4 1.8L5 1Q7 0.5 7.5 2L8.5 2.3Q10 3.5 9.8 6L9 9Q8 10.5 5.5 10.5Q3.5 10.5 2 8.5L0.8 6.5Q1 5 2.5 5.5Z" fill="#b8c4d0" stroke="#2a2a2a" stroke-width="1.1"/><path d="M4 4V6M6 3V6M8 3.5V6" stroke="#555" stroke-width="0.7"/></svg>
<svg style="left:503px;top:36px;" width="11" height="11" viewBox="0 0 11 11"><path d="M1 6L5.5 3.5L10 6L5.5 9.5Z" fill="#c8c8d0" stroke="#444" stroke-width="0.9"/><path d="M5.5 0.5V5.5M3.5 3.5L5.5 5.5L7.5 3.5" stroke="#111" stroke-width="1.3" fill="none"/></svg>
<svg style="left:516px;top:36px;" width="12" height="11" viewBox="0 0 12 11"><rect x="0.5" y="0.5" width="10.5" height="9.5" fill="#2a3a60"/><rect x="1.5" y="1.5" width="8.5" height="7.5" fill="#b8c8e0"/><path d="M4 3.5Q4 1.8 5.8 1.8Q7.6 1.8 7.6 3.5Q7.6 4.6 5.8 5.5V6.5" stroke="#10206a" stroke-width="1.3" fill="none"/><rect x="5.1" y="7.3" width="1.4" height="1.4" fill="#10206a"/></svg>
<svg style="left:530px;top:36px;" width="11" height="10" viewBox="0 0 11 10"><rect x="0.5" y="1" width="10" height="8" fill="#d8dce8" stroke="#555" stroke-width="0.9"/><path d="M0.5 3H10.5" stroke="#555"/><path d="M2.5 5.5H4.5M6.5 5.5H8.5M3.5 4.5V6.5M7.5 4.5V6.5" stroke="#111" stroke-width="0.9"/></svg>
<svg style="left:544px;top:36px;" width="11" height="11" viewBox="0 0 11 11"><path d="M2.5 8.5L3.5 1.5H8.5L8.8 8.5" stroke="#777" stroke-width="1.1" fill="#dde"/><circle cx="2.2" cy="9" r="1.8" fill="#601818"/><circle cx="8.6" cy="9" r="1.8" fill="#401010"/></svg>
<svg style="left:558px;top:36px;" width="11" height="11" viewBox="0 0 11 11"><rect x="0.5" y="0.5" width="9" height="9.5" fill="#e8e8e8" stroke="#888" stroke-width="0.9"/><path d="M2 1.5L9 9M9 1.5L2 9" stroke="#902020" stroke-width="1.8"/><rect x="3.5" y="4" width="3" height="3" fill="#333"/></svg>
<svg style="left:584.5px;top:36px;" width="10" height="11" viewBox="0 0 10 11"><path d="M5 6.5L0.8 2.8H3V0.3H7V2.8H9.2Z" fill="#1a3ac8"/><circle cx="5" cy="8.8" r="1.5" fill="#1a2a90"/></svg>
<svg style="left:597px;top:36px;" width="12" height="11" viewBox="0 0 12 11"><path d="M2 7Q2.5 2 7.5 2.8" stroke="#1a3ac8" stroke-width="2.6" fill="none"/><path d="M6 0.3L11.5 4.5L6.5 7.5Z" fill="#1a3ac8"/><circle cx="2" cy="8" r="1.6" fill="#1a2a90"/></svg>
<svg style="left:612px;top:36px;" width="10" height="11" viewBox="0 0 10 11"><path d="M5 0.3L9.2 4H7V6.3H3V4H0.8Z" fill="#1a3ac8"/><circle cx="5" cy="8.8" r="1.5" fill="#1a2a90"/></svg>
<div style="left:626px;top:36px;width:1px;height:10px;background:#a8a8a8"></div>
<svg style="left:632.5px;top:36px;" width="11" height="11" viewBox="0 0 11 11"><path d="M5.5 6.3L1.5 2.6H3.6V0.3H7.4V2.6H9.5Z" fill="#1a3ac8"/><circle cx="2" cy="8.8" r="1.2" fill="#3a4a70"/><circle cx="5.5" cy="8.8" r="1.3" fill="#1a2a90"/><circle cx="9" cy="8.8" r="1.2" fill="#3a4a70"/></svg>
<svg style="left:645px;top:41.5px;" width="4" height="3" viewBox="0 0 4 3"><path d="M0 0H3.5L1.75 2.5Z" fill="#111"/></svg>
<svg style="left:650px;top:36px;" width="13" height="11" viewBox="0 0 13 11"><path d="M2.5 7Q3 2 8 2.5" stroke="#1a3ac8" stroke-width="2.6" fill="none"/><path d="M6.5 0L12 4L7 7Z" fill="#1a3ac8"/><path d="M1.5 9.6H12" stroke="#3a4a70" stroke-width="1.2"/><circle cx="2.5" cy="8" r="1.3" fill="#1a2a90"/></svg>
<svg style="left:667px;top:36px;" width="11" height="11" viewBox="0 0 11 11"><path d="M5.5 0.3L9.5 4H7.4V6.3H3.6V4H1.5Z" fill="#1a3ac8"/><circle cx="2" cy="8.8" r="1.2" fill="#3a4a70"/><circle cx="5.5" cy="8.8" r="1.3" fill="#1a2a90"/><circle cx="9" cy="8.8" r="1.2" fill="#3a4a70"/></svg>
<span class="t" style="left:690.8px;top:41.50px;font-size:7.3px;color:#111;-webkit-text-stroke:0.05px currentColor;">Layout</span>
<div style="left:715.3px;top:35.3px;width:90.2px;height:11.5px;background:#e8e8e8;border-left:1px solid #999;border-top:1px solid #999;border-bottom:1px solid #fff"></div>
<span class="t" style="left:717px;top:42.60px;font-family:Liberation Mono,monospace;font-size:7.3px;color:#111;-webkit-text-stroke:0.05px currentColor;">Simulate</span>
<div style="left:794px;top:36px;width:11px;height:10.5px;background:#f4f4f4;border-right:1px solid #555;border-bottom:1px solid #555"></div>
<svg style="left:795.5px;top:38.5px;" width="8" height="6" viewBox="0 0 8 6"><path d="M0.5 0.5H7.5L4 5Z" fill="#000"/></svg>
<span class="t" style="left:9px;top:61.10px;font-size:6.6px;color:#555;-webkit-text-stroke:0.05px currentColor;">ColumnLayout</span>
<div style="left:55px;top:56px;width:147px;height:12px;background:#ebebeb;border-left:1px solid #aaa;border-top:1px solid #aaa;border-bottom:1px solid #fff"></div>
<span class="t" style="left:57px;top:63.70px;font-family:Liberation Mono,monospace;font-size:7.3px;color:#777;-webkit-text-stroke:0.05px currentColor;">Default</span>
<div style="left:191.5px;top:56.5px;width:10.5px;height:11px;background:#f4f4f4;border-right:1px solid #666;border-bottom:1px solid #666"></div>
<svg style="left:193px;top:59.5px;" width="8" height="6" viewBox="0 0 8 6"><path d="M0.5 0.5H7.5L4 4.5Z" fill="#555"/></svg>
<svg style="left:770px;top:56.5px;" width="11" height="11" viewBox="0 0 11 11"><path d="M0.5 3L3 1.5H8.5V5.5L6 7.5H0.5Z" fill="#7ab8e8" stroke="#3a78b8" stroke-width="0.8"/><path d="M2 4.5H6M2 3H7" stroke="#d8f0ff" stroke-width="0.8"/><rect x="5" y="5.5" width="4" height="4.5" rx="1" fill="none" stroke="#5a9a50" stroke-width="1.1"/></svg>
<svg style="left:784px;top:62px;" width="4" height="3" viewBox="0 0 4 3"><path d="M0 0H3.5L1.75 2.5Z" fill="#111"/></svg>
<svg style="left:789px;top:56.5px;" width="11" height="11" viewBox="0 0 11 11"><path d="M0.5 3L3 1.5H8.5V5.5L6 7.5H0.5Z" fill="#7ab8e8" stroke="#3a78b8" stroke-width="0.8"/><path d="M2 4.5H6M2 3H7" stroke="#d8f0ff" stroke-width="0.8"/><circle cx="7" cy="8" r="2.3" fill="#e08a30"/></svg>
<svg style="left:803.5px;top:62px;" width="4" height="3" viewBox="0 0 4 3"><path d="M0 0H3.5L1.75 2.5Z" fill="#111"/></svg>
<svg style="left:808px;top:56.5px;" width="11" height="11" viewBox="0 0 11 11"><path d="M0.5 3L3 1.5H8.5V5.5L6 7.5H0.5Z" fill="#7ab8e8" stroke="#3a78b8" stroke-width="0.8"/><path d="M2 4.5H6M2 3H7" stroke="#d8f0ff" stroke-width="0.8"/><path d="M3 10L9.5 3" stroke="#d0a030" stroke-width="1.8"/></svg>
<svg style="left:823px;top:56.5px;" width="11" height="11" viewBox="0 0 11 11"><path d="M0.5 3L3 1.5H8.5V5.5L6 7.5H0.5Z" fill="#7ab8e8" stroke="#3a78b8" stroke-width="0.8"/><path d="M2 4.5H6M2 3H7" stroke="#d8f0ff" stroke-width="0.8"/><rect x="4.5" y="5" width="5" height="5" fill="#f8f8f8" stroke="#5a7ab0" stroke-width="0.9"/><path d="M4.5 7.5H9.5" stroke="#5a7ab0"/></svg>
<svg style="left:836.5px;top:62px;" width="4" height="3" viewBox="0 0 4 3"><path d="M0 0H3.5L1.75 2.5Z" fill="#111"/></svg>
<svg style="left:842px;top:56.5px;" width="11" height="11" viewBox="0 0 11 11"><path d="M0.5 3L3 1.5H8.5V5.5L6 7.5H0.5Z" fill="#7ab8e8" stroke="#3a78b8" stroke-width="0.8"/><path d="M2 4.5H6M2 3H7" stroke="#d8f0ff" stroke-width="0.8"/><path d="M4.5 5H8.5V7.5H10.5L6.5 10.5L2.5 7.5H4.5Z" fill="#3a9a3a"/></svg>
<div style="left:8px;top:76px;width:12.5px;height:12.5px;background:#f8f8f8;border-left:1px solid #ddd;border-top:1px solid #ddd;border-right:1px solid #bbb;border-bottom:1px solid #bbb"></div>
<span class="t" style="left:14.25px;top:83.00px;font-size:6.6px;color:#666;transform:translate(-50%,-50%);-webkit-text-stroke:0;font-family:Liberation Serif,serif;">I</span>
<div style="left:24px;top:76px;width:13px;height:12.5px;background:#f8f8f8;border-left:1px solid #ddd;border-top:1px solid #ddd;border-right:1px solid #bbb;border-bottom:1px solid #bbb"></div>
<span class="t" style="left:30.5px;top:83.00px;font-size:6.6px;color:#666;transform:translate(-50%,-50%);-webkit-text-stroke:0;font-family:Liberation Serif,serif;">O</span>
<div style="left:41px;top:76px;width:13px;height:12.5px;background:#f8f8f8;border-left:1px solid #ddd;border-top:1px solid #ddd;border-right:1px solid #bbb;border-bottom:1px solid #bbb"></div>
<span class="t" style="left:47.5px;top:83.00px;font-size:6.6px;color:#666;transform:translate(-50%,-50%);-webkit-text-stroke:0;font-family:Liberation Serif,serif;">I/O</span>
<div style="left:57px;top:76px;width:12.5px;height:12.5px;background:#f8f8f8;border-left:1px solid #ddd;border-top:1px solid #ddd;border-right:1px solid #bbb;border-bottom:1px solid #bbb"></div>
<span class="t" style="left:63.25px;top:83.00px;font-size:6.6px;color:#666;transform:translate(-50%,-50%);-webkit-text-stroke:0;font-family:Liberation Serif,serif;">[1]</span>
<div style="left:72.5px;top:76px;width:13px;height:12.5px;border-right:1px solid #777;border-bottom:1px solid #777;border-left:1px solid #fff;border-top:1px solid #fff"></div>
<span class="t" style="left:79px;top:83.10px;font-size:6.6px;color:#333;transform:translate(-50%,-50%) scaleX(0.85);-webkit-text-stroke:0.05px currentColor;">ALL</span>
<svg style="left:89px;top:77px;" width="12" height="11" viewBox="0 0 12 11"><path d="M1 9L4 6" stroke="#aab" stroke-width="1.5"/><ellipse cx="6.5" cy="4.5" rx="4.2" ry="2.3" transform="rotate(-40 6.5 4.5)" fill="#a0a8d8"/><path d="M8 1L11 0.5" stroke="#cce" stroke-width="1"/></svg>
<div style="left:114.5px;top:76px;width:13px;height:13px;background:#fcfcfc;border-right:1px solid #888;border-bottom:1px solid #888;border-left:1px solid #fff;border-top:1px solid #fff"></div>
<svg style="left:117px;top:77.5px;" width="9" height="10" viewBox="0 0 9 10"><path d="M1.5 0.5V8L3.5 6L5.5 9.5L7 8.5L5 5.5H8Z" fill="#111"/></svg>
<svg style="left:132px;top:77px;" width="12" height="11" viewBox="0 0 12 11"><rect x="1" y="1" width="2" height="1" fill="#333"/><rect x="1" y="1" width="1" height="2" fill="#333"/><rect x="3" y="3" width="6" height="5.5" fill="none" stroke="#111" stroke-width="1.4"/><path d="M7 6.5L10.5 10" stroke="#111" stroke-width="1.6"/></svg>
<svg style="left:148px;top:77px;" width="12" height="12" viewBox="0 0 12 12"><path d="M6 0.5V11.5M0.5 6H11.5" stroke="#555" stroke-width="1.1"/><path d="M4 2.5L6 0.5L8 2.5M4 9.5L6 11.5L8 9.5M2.5 4L0.5 6L2.5 8M9.5 4L11.5 6L9.5 8" stroke="#555" stroke-width="1" fill="none"/></svg>
<svg style="left:165px;top:77px;" width="12" height="12" viewBox="0 0 12 12"><path d="M3 0.5V8.5M8 0.5V8.5" stroke="#333" stroke-width="1.2"/><circle cx="3" cy="9.5" r="1.7" fill="#333"/><circle cx="8" cy="9.5" r="1.7" fill="#333"/><path d="M0.5 11.5H11" stroke="#777"/></svg>
<svg style="left:181px;top:77px;" width="12" height="12" viewBox="0 0 12 12"><rect x="0.5" y="2" width="3" height="2" fill="#222"/><rect x="0.5" y="7" width="3" height="2" fill="#222"/><path d="M5 0.5V10.5" stroke="#333" stroke-width="1"/><path d="M6 2H11V9H6M6 5.5H10" stroke="#333" stroke-width="1" fill="none"/></svg>
<div style="left:197.5px;top:76px;width:1px;height:12px;background:#a8a8a8"></div>
<svg style="left:203px;top:76px;" width="13" height="13" viewBox="0 0 13 13"><rect x="0.5" y="0.5" width="5" height="11.5" fill="#222"/><circle cx="3" cy="3" r="1.5" fill="#e02020"/><circle cx="3" cy="6.2" r="1.3" fill="#666"/><circle cx="3" cy="9.3" r="1.4" fill="#30c030"/><path d="M8 3L11.5 6.2L8 9.5Z" fill="none" stroke="#666" stroke-width="1"/></svg>
<svg style="left:229px;top:77px;" width="10" height="11" viewBox="0 0 10 11"><rect x="0.5" y="8" width="8.5" height="2.5" fill="#e8e060" stroke="#7a7010" stroke-width="0.8"/><path d="M2.5 8V1.5H4.5V8" fill="#e8e060" stroke="#7a7010" stroke-width="0.8"/><path d="M5 4.5H9M7.5 3L9 4.5L7.5 6" stroke="#555" stroke-width="0.9" fill="none"/></svg>
<svg style="left:243px;top:77px;" width="10" height="11" viewBox="0 0 10 11"><rect x="0.5" y="8" width="8.5" height="2.5" fill="#e8e060" stroke="#7a7010" stroke-width="0.8"/><path d="M2.5 8V1.5H4.5V8" fill="#e8e060" stroke="#7a7010" stroke-width="0.8"/><path d="M5 4.5H9" stroke="#666" stroke-width="0.9"/></svg>
<svg style="left:257px;top:77px;" width="10" height="11" viewBox="0 0 10 11"><path d="M0.5 1.5H2V9.5H9.5" stroke="#556" stroke-width="1" fill="none"/><path d="M9.5 5H3.5M5.5 3L3.5 5L5.5 7" stroke="#1a2a80" stroke-width="1.4" fill="none"/></svg>
<svg style="left:270px;top:77px;" width="10" height="11" viewBox="0 0 10 11"><path d="M9.5 1.5H8V9.5H0.5" stroke="#556" stroke-width="1" fill="none"/><path d="M0.5 5H6.5M4.5 3L6.5 5L4.5 7" stroke="#1a2a80" stroke-width="1.4" fill="none"/></svg>
<svg style="left:284px;top:77px;" width="11" height="11" viewBox="0 0 11 11"><path d="M1 1.5H3.5V9.5H10" stroke="#b8b8c0" stroke-width="1" fill="none"/><path d="M4 6H8" stroke="#9aa" stroke-width="1"/></svg>
<svg style="left:298px;top:77px;" width="11" height="11" viewBox="0 0 11 11"><path d="M0.5 9.5H4V1.5H10" stroke="#b8b8c0" stroke-width="1" fill="none"/><path d="M2 6H6" stroke="#9aa" stroke-width="1"/></svg>
<svg style="left:312px;top:77px;" width="11" height="11" viewBox="0 0 11 11"><path d="M1 1.5H3.5V9.5H10" stroke="#b8b8c0" stroke-width="1" fill="none"/><path d="M4 6H8" stroke="#9aa" stroke-width="1"/></svg>
<svg style="left:326px;top:77px;" width="11" height="11" viewBox="0 0 11 11"><path d="M0.5 9.5H4V1.5H10" stroke="#b8b8c0" stroke-width="1" fill="none"/><path d="M2 6H6" stroke="#9aa" stroke-width="1"/></svg>
<svg style="left:350px;top:77px;" width="12" height="11" viewBox="0 0 12 11"><path d="M0.5 2H3Q5 2 5 5.5Q5 9 3 9H0.5M5 5.5H11" stroke="#333" stroke-width="1.1" fill="none"/><path d="M9 3.5L7 5.5L9 7.5" stroke="#5a7ab0" stroke-width="1.1" fill="none"/></svg>
<div style="left:364px;top:81.5px;width:2px;height:1px;background:#444"></div>
<svg style="left:370px;top:77px;" width="12" height="11" viewBox="0 0 12 11"><path d="M11 2H8.5Q6.5 2 6.5 5.5Q6.5 9 8.5 9H11M0.5 5.5H6.5" stroke="#333" stroke-width="1.1" fill="none"/><path d="M3 3.5L5 5.5L3 7.5" stroke="#5a7ab0" stroke-width="1.1" fill="none"/></svg>
<div style="left:383.5px;top:81.5px;width:2px;height:1px;background:#444"></div>
<svg style="left:389px;top:77px;" width="12" height="11" viewBox="0 0 12 11"><path d="M0.5 2H2.5V9H0.5M2.5 5.5H4M8 5.5H11.5" stroke="#333" stroke-width="1" fill="none"/><path d="M6 2.5L9 5.5L6 8.5L3 5.5Z" fill="none" stroke="#333" stroke-width="1"/></svg>
<div style="left:405px;top:76px;width:1px;height:12px;background:#a8a8a8"></div>
<span class="t" style="left:412px;top:82.00px;font-size:7px;color:#666;-webkit-text-stroke:0.05px currentColor;">Search:</span>
<div style="left:439px;top:76.3px;width:85px;height:11px;background:#eef0f4;border-left:1px solid #bbb;border-top:1px solid #bbb"></div>
<div style="left:513px;top:76.8px;width:11px;height:10.5px;background:#f4f4f4;border-right:1px solid #777;border-bottom:1px solid #777"></div>
<svg style="left:514.5px;top:79.5px;" width="8" height="6" viewBox="0 0 8 6"><path d="M0.5 0.5H7.5L4 4.5Z" fill="#333"/></svg>
<svg style="left:527px;top:77px;" width="12" height="11" viewBox="0 0 12 11"><circle cx="7.5" cy="4" r="3" fill="#b8c0d0" stroke="#8a90a8" stroke-width="0.9"/><path d="M1 10L5 6.5" stroke="#8a9ab8" stroke-width="1.6"/><rect x="5" y="2" width="5" height="4" fill="#c8d0e0"/></svg>
<svg style="left:539.5px;top:77px;" width="12" height="11" viewBox="0 0 12 11"><circle cx="7.5" cy="4" r="3" fill="#b8c0d0" stroke="#8a90a8" stroke-width="0.9"/><path d="M1 10L5 6.5" stroke="#8a9ab8" stroke-width="1.6"/><rect x="5" y="2" width="5" height="4" fill="#c8d0e0"/></svg>
<svg style="left:554px;top:77px;" width="12" height="11" viewBox="0 0 12 11"><circle cx="7.5" cy="4" r="3" fill="#b8c0d0" stroke="#8a90a8" stroke-width="0.9"/><path d="M1 10L5 6.5" stroke="#8a9ab8" stroke-width="1.6"/><rect x="5" y="2" width="5" height="4" fill="#c8d0e0"/></svg>
<svg style="left:581px;top:77px;" width="12" height="12" viewBox="0 0 12 12"><circle cx="4.8" cy="4.8" r="3.8" fill="#fff" stroke="#111" stroke-width="1.1"/><path d="M7.5 7.5L11 11" stroke="#1a2a60" stroke-width="2"/><path d="M3 4.8H6.6M4.8 3V6.6" stroke="#111" stroke-width="1.1"/></svg>
<svg style="left:595px;top:77px;" width="12" height="12" viewBox="0 0 12 12"><circle cx="4.8" cy="4.8" r="3.8" fill="#fff" stroke="#111" stroke-width="1.1"/><path d="M7.5 7.5L11 11" stroke="#1a2a60" stroke-width="2"/><path d="M3 4.8H6.6" stroke="#111" stroke-width="1.1"/></svg>
<svg style="left:609px;top:77px;" width="12" height="12" viewBox="0 0 12 12"><circle cx="4.8" cy="4.8" r="4.2" fill="#1a3a80"/><circle cx="3.5" cy="3.5" r="1.4" fill="#6a8ad0"/><path d="M7.5 7.5L11 11" stroke="#1a2a60" stroke-width="2"/></svg>
<svg style="left:623px;top:77px;" width="12" height="12" viewBox="0 0 12 12"><rect x="0.5" y="8" width="8" height="2.5" fill="#f0e070" stroke="#9a8a20" stroke-width="0.8"/><path d="M2.5 8V3" stroke="#9a8a20" stroke-width="1.2"/><circle cx="7.5" cy="3.5" r="2.5" fill="none" stroke="#333" stroke-width="1"/><path d="M9 5.5L11 8" stroke="#333" stroke-width="1.2"/></svg>
<svg style="left:637px;top:77px;" width="12" height="12" viewBox="0 0 12 12"><rect x="0.5" y="8" width="9" height="2.5" fill="#f0e070" stroke="#9a8a20" stroke-width="0.8"/><path d="M2 8V5M6 8V5" stroke="#9a8a20" stroke-width="1.2"/><circle cx="7.5" cy="3" r="2.5" fill="none" stroke="#333" stroke-width="1"/><path d="M9 5L11 7.5" stroke="#333" stroke-width="1.2"/></svg>
<svg style="left:651px;top:77px;" width="12" height="12" viewBox="0 0 12 12"><rect x="0.5" y="1.5" width="6" height="5" fill="#e0e0e8" stroke="#888" stroke-width="0.9"/><circle cx="6.5" cy="6" r="2.6" fill="none" stroke="#777" stroke-width="1"/><path d="M8.2 8L10.5 10.5" stroke="#777" stroke-width="1.3"/></svg>
<div style="left:676px;top:76px;width:12.5px;height:13px;background:#fcfcfc;border-right:1px solid #999;border-bottom:1px solid #999"></div>
<div style="left:681.8px;top:78px;width:0.9px;height:9px;background:#333"></div>
<div style="left:692px;top:76px;width:12.5px;height:13px;border-right:1px solid #999;border-bottom:1px solid #999"></div>
<div style="left:695px;top:77.5px;width:6px;height:9.5px;background:#1a3a70"></div>
<div style="left:709px;top:76px;width:12.5px;height:13px;border-right:1px solid #999;border-bottom:1px solid #999"></div>
<div style="left:710.5px;top:77.5px;width:9.5px;height:9.5px;background:#1a6a1a;border:1px solid #0a3a0a"></div>
<div style="left:726px;top:77px;width:1px;height:11px;background:#a8a8a8"></div>
<div style="left:731px;top:77.5px;width:11px;height:10px;background:#8a90a8"></div>
<div style="left:736px;top:77.5px;width:1px;height:10px;background:#aab"></div>
<svg style="left:747px;top:77px;" width="8" height="11" viewBox="0 0 8 11"><path d="M0.5 10.5H2.5V1.5H6" stroke="#888" stroke-width="1" fill="none"/><rect x="3" y="2" width="2.5" height="8" fill="#7a7a80"/></svg>
<svg style="left:760px;top:77px;" width="11" height="11" viewBox="0 0 11 11"><path d="M0.5 10H5V1.5H10" stroke="#a8a8b0" stroke-width="1" fill="none"/></svg>
<svg style="left:774px;top:77px;" width="11" height="11" viewBox="0 0 11 11"><path d="M0.5 10H5V1.5H10" stroke="#b8b8c0" stroke-width="1" fill="none"/></svg>
</body></html>
